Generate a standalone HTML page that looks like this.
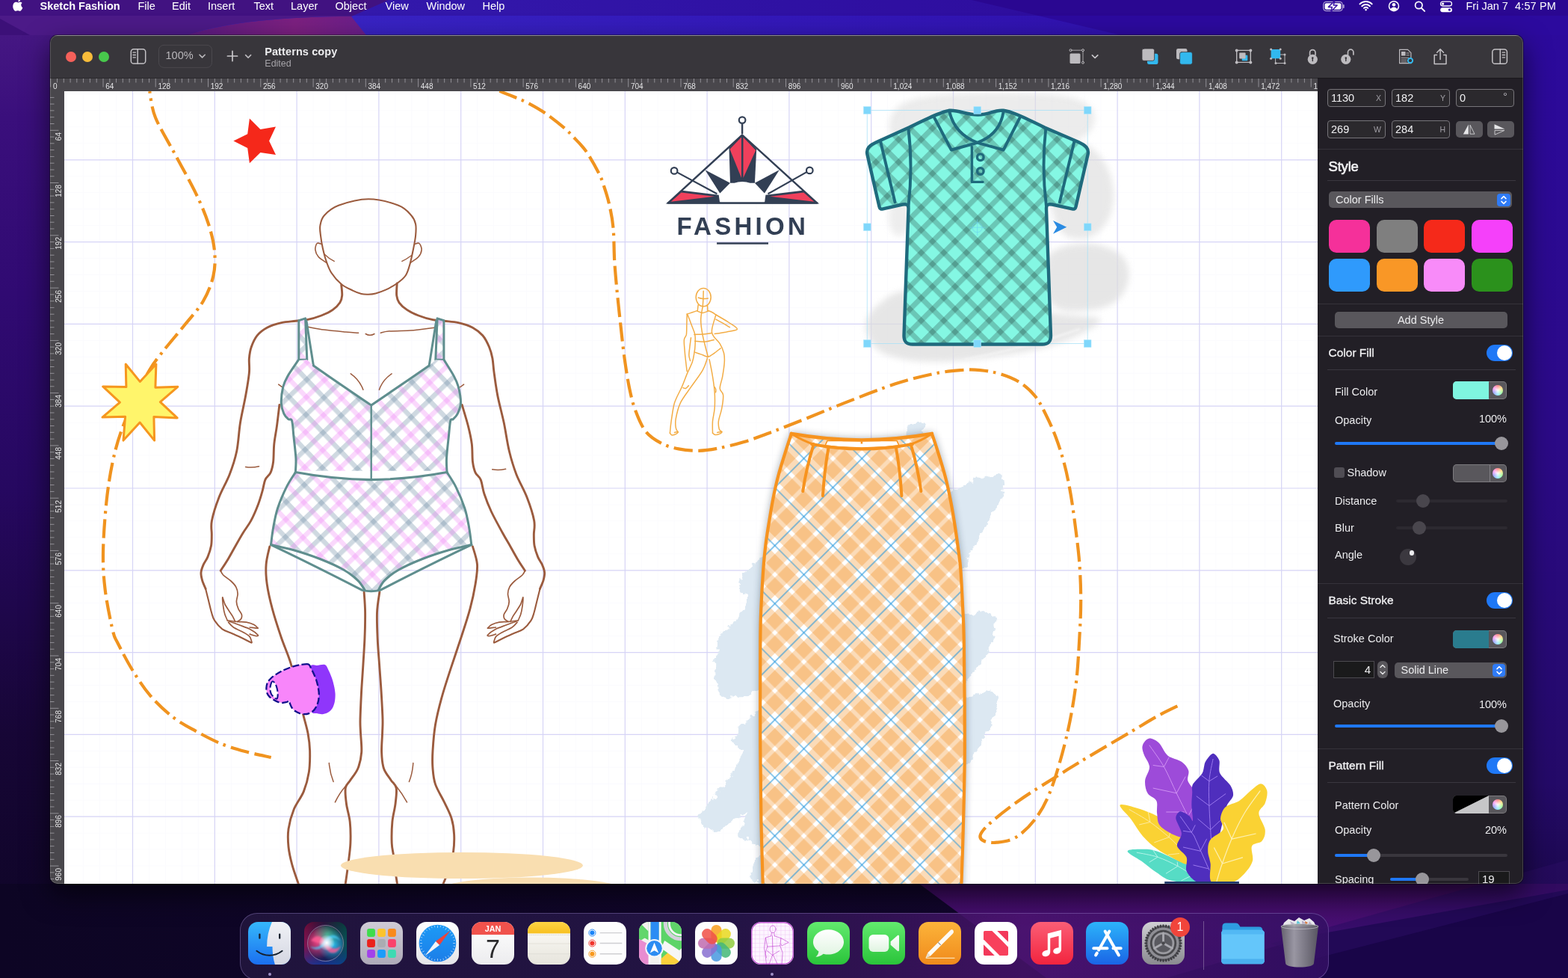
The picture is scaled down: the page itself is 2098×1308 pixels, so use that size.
<!DOCTYPE html>
<html lang="en">
<head>
<meta charset="utf-8">
<title>Sketch Fashion — Patterns copy</title>
<style>
*{box-sizing:border-box;margin:0;padding:0}
html,body{width:2098px;height:1308px;overflow:hidden;background:#1a0a4a}
body{font-family:"Liberation Sans",sans-serif;position:relative;color:#fff;-webkit-font-smoothing:antialiased}
.abs{position:absolute}
#wall{position:absolute;left:0;top:0;width:2098px;height:1308px}
#menubar,#win,#dock{will-change:transform}
#menubar{position:absolute;left:0;top:0;width:2098px;height:21px;background:rgba(40,0,110,.28)}
#menubar span{position:absolute;top:-.5px;font-size:14.5px;line-height:17px;color:#fff;white-space:nowrap}
#menubar b{font-weight:700}
#win{position:absolute;left:67px;top:47px;width:1971px;height:1135px;border-radius:10px;overflow:hidden;background:#38363b;box-shadow:0 0 0 1px rgba(0,0,0,.35),0 14px 36px rgba(0,0,0,.6)}
#win:after{content:"";position:absolute;left:0;top:0;width:1971px;height:1135px;border-radius:10px;box-shadow:inset 0 0 0 1px rgba(255,255,255,.16);pointer-events:none}
#toolbar{position:absolute;left:0;top:0;width:1971px;height:57px;background:#38363b;border-top:1px solid #77757a}
#hruler{position:absolute;left:0;top:57px;width:1696px;height:18px;background:#49474c;border-top:1px solid #2a282c;overflow:hidden}
#vruler{position:absolute;left:0;top:75px;width:19px;height:1060px;background:#49474c;overflow:hidden}
.rl{position:absolute;font-size:10px;line-height:10px;color:#e4e4e6;white-space:nowrap}
#canvas{position:absolute;left:19px;top:75px;width:1677px;height:1060px;background:#fff;overflow:hidden}
#panel{position:absolute;left:1696px;top:57px;width:275px;height:1078px;background:#221f26;border-top:1px solid #1a181c;overflow:hidden}
#panel .t{position:absolute;white-space:nowrap;color:#ebebed;font-size:14.5px;line-height:18px}
#panel .h{position:absolute;white-space:nowrap;color:#f2f2f4;font-size:15.5px;line-height:20px;font-weight:400;-webkit-text-stroke:.28px #f2f2f4}
#panel .sep{position:absolute;left:0;width:275px;height:1px;background:#35323a}
#panel .ln{position:absolute;left:13px;width:252px;height:1px;background:#3a373f}
.fld{position:absolute;height:24px;border:1px solid #77757a;border-radius:4px;background:#2b292d;color:#f0f0f2;font-size:14.5px;line-height:22px;padding-left:4px;white-space:nowrap}
.fld i{position:absolute;right:5px;top:0;font-style:normal;font-size:10.5px;color:#a09ea4}
.btn{position:absolute;background:#59575c;border-radius:5px}
.sw{position:absolute;width:55px;height:44px;border-radius:10px}
.tog{position:absolute;width:35px;height:22px;border-radius:11px;background:#1f78f6}
.tog:after{content:"";position:absolute;right:1px;top:1px;width:20px;height:20px;border-radius:10px;background:#fff}
.well{position:absolute;width:72px;height:24px;border-radius:5px;background:#59575c;overflow:hidden;box-shadow:inset 0 0 0 1px rgba(255,255,255,.22)}
.well .c{position:absolute;left:0;top:0;width:48px;height:24px}
.well .w{position:absolute;left:53px;top:5px;width:14px;height:14px;border-radius:7px;background:conic-gradient(from 0deg,#ff6a6a,#ffd86a,#8cff8a,#7fe6ff,#8a8cff,#ff8af0,#ff6a6a)}
.well .w:after{content:"";position:absolute;left:0;top:0;width:14px;height:14px;border-radius:7px;background:radial-gradient(circle,rgba(255,255,255,.95) 0,rgba(255,255,255,.3) 55%,rgba(255,255,255,0) 100%)}
.trk{position:absolute;height:4px;border-radius:2px}
.knob{position:absolute;width:18px;height:18px;border-radius:9px;background:#98969b}
.step{position:absolute;border-radius:4px;background:#2f7bf6}
#dock{position:absolute;left:320.5px;top:1221px;width:1457px;height:90px;border-radius:23px;background:linear-gradient(90deg,rgba(34,22,62,.9) 0%,rgba(38,22,72,.88) 45%,rgba(74,20,110,.8) 72%,rgba(52,16,100,.85) 100%);box-shadow:inset 0 0 0 1px rgba(170,150,220,.35)}
.di{position:absolute;top:12px;width:57px;height:57px;border-radius:13px;overflow:hidden}
</style>
</head>
<body>
<svg id="wall" width="2098" height="1308" viewBox="0 0 2098 1308">
<defs>
<linearGradient id="wg1" x1="0" y1="0" x2="0" y2="1"><stop offset="0" stop-color="#4a1a86"/><stop offset=".12" stop-color="#3a0f7c"/><stop offset=".3" stop-color="#300a72"/><stop offset=".5" stop-color="#260860"/><stop offset=".75" stop-color="#170636"/><stop offset="1" stop-color="#0d0524"/></linearGradient>
<linearGradient id="wg2" x1="0" y1="0" x2="0" y2="1"><stop offset="0" stop-color="#2c0a9e"/><stop offset=".45" stop-color="#2b0a86"/><stop offset=".8" stop-color="#240a68"/><stop offset=".93" stop-color="#1a0848"/><stop offset="1" stop-color="#170740"/></linearGradient>
<linearGradient id="wg3" x1="0" y1="0" x2="1" y2="0"><stop offset="0" stop-color="#3c2ccc"/><stop offset=".5" stop-color="#3318b8"/><stop offset="1" stop-color="#2c0aa0"/></linearGradient>
<linearGradient id="wg4" x1="0" y1="0" x2="1" y2="0"><stop offset="0" stop-color="#5a1a82"/><stop offset=".6" stop-color="#7c2080"/><stop offset="1" stop-color="#6a1e8a"/></linearGradient>
<linearGradient id="wg5" x1="0" y1="0" x2="0" y2="1"><stop offset="0" stop-color="#3a0a5c"/><stop offset=".5" stop-color="#4a1076"/><stop offset="1" stop-color="#3c0e6a"/></linearGradient>
<linearGradient id="wg6" x1="0" y1="0" x2="1" y2="0"><stop offset="0" stop-color="#0d0524"/><stop offset="1" stop-color="#140630"/></linearGradient>
</defs>
<rect width="2098" height="1308" fill="url(#wg1)"/>
<rect x="1000" width="1098" height="1308" fill="url(#wg2)"/>
<path d="M0 1182H2098V1308H0Z" fill="url(#wg6)"/>
<path d="M1230 1182H2098V1308H1400Z" fill="url(#wg5)"/>
<path d="M1560 1308L1760 1250L2098 1190V1308Z" fill="#190548"/>
<path d="M1700 1262L2098 1150V1195L1760 1282Z" fill="#2a0c62" opacity=".55"/>
<path d="M0 0H2098V47H0Z" fill="url(#wg3)"/>
<path d="M0 0H300L260 47H0Z" fill="#4a1a86"/>
<path d="M250 47C300 30 380 22 470 22L490 47Z" fill="url(#wg4)"/>
<path d="M0 0H520L470 22C380 22 300 30 250 47H0Z" fill="#4c1a88"/>
<path d="M0 25L40 47H0Z" fill="#3c1078"/>
<path d="M1300 0H2098V47H1500Z" fill="#2c0a9e"/>
</svg>
<div id="menubar">
<svg class="abs" style="left:17px;top:0" width="15" height="17" viewBox="0 0 15 17"><path fill="#fff" d="M10.3 0c.1 1-.3 1.9-.9 2.6-.6.7-1.5 1.2-2.4 1.1C6.9 2.8 7.4 1.8 7.9 1.2 8.5.5 9.5 0 10.3 0ZM13.4 12.3c-.4.9-.6 1.3-1.1 2.1-.7 1.1-1.7 2.5-2.9 2.5-1.1 0-1.4-.7-2.9-.7-1.5 0-1.8.7-2.9.7-1.2 0-2.1-1.2-2.8-2.3C-1.2 11.5-.4 7.3 1.2 5.6 2 4.7 3.1 4.2 4.1 4.2c1.2 0 2 .7 3 .7 1 0 1.6-.7 3-.7.9 0 1.9.5 2.6 1.4-2.3 1.3-1.9 4.6.7 6.7Z" transform="translate(.6 -1.2) scale(.95)"/></svg>
<span style="left:53.5px"><b>Sketch Fashion</b></span>
<span style="left:184.5px">File</span>
<span style="left:230px">Edit</span>
<span style="left:278px">Insert</span>
<span style="left:339.5px">Text</span>
<span style="left:389px">Layer</span>
<span style="left:448.5px">Object</span>
<span style="left:515.5px">View</span>
<span style="left:570.5px">Window</span>
<span style="left:645.5px">Help</span>
<span style="left:1961.5px">Fri Jan 7</span>
<span style="left:2027px;letter-spacing:.15px">4:57 PM</span>
<svg class="abs" style="left:1768px;top:0" width="180" height="18" viewBox="1768 0 180 18" fill="none" stroke="#fff">
<rect x="1770.8" y="2.4" width="25.4" height="12.2" rx="3.4" stroke-width="1" opacity=".75"/>
<rect x="1772.6" y="4.2" width="21.8" height="8.6" rx="2" fill="#fff" stroke="none"/>
<path d="M1797.9 6.7v3.6" stroke-width="1.5" stroke-linecap="round" opacity=".7"/>
<path d="M1785.8 1.3L1777.4 9.4H1782.4L1780.8 15.6L1789.2 7H1784.2Z" fill="#fff" stroke="#3a12a4" stroke-width="1.5" stroke-linejoin="round"/>
<path d="M1819.5 5.4a11.5 11.5 0 0 1 16.2 0M1822.3 8.2a7.5 7.5 0 0 1 10.6 0M1825 10.9a3.7 3.7 0 0 1 5.2 0" stroke-width="2" stroke-linecap="round"/>
<circle cx="1827.6" cy="13.1" r="1.3" fill="#fff" stroke="none"/>
<circle cx="1865" cy="8.2" r="6.5" stroke-width="1.5"/>
<circle cx="1865" cy="6.3" r="2.3" fill="#fff" stroke="none"/>
<path d="M1860.6 12.3c.9-2 2.6-2.9 4.4-2.9s3.5.9 4.4 2.9c-1.2 1.3-2.7 1.9-4.4 1.9s-3.2-.6-4.4-1.9z" fill="#fff" stroke="none"/>
<circle cx="1898.3" cy="7" r="4.7" stroke-width="1.7"/>
<path d="M1901.8 10.6l4.3 4.3" stroke-width="2" stroke-linecap="round"/>
<rect x="1927.5" y="2.2" width="15" height="5.8" rx="2.9" stroke-width="1.3"/>
<circle cx="1930.6" cy="5.1" r="1.7" fill="#fff" stroke="none"/>
<rect x="1927.2" y="10.2" width="15.8" height="6" rx="3" fill="#fff" stroke="none"/>
<circle cx="1939.4" cy="13.1" r="1.7" fill="#3a12a4" stroke="none"/>
</svg>
</div>
<div id="win">
<div id="toolbar">
<div class="abs" style="left:21px;top:20.5px;width:14px;height:14px;border-radius:7px;background:#f5605a"></div>
<div class="abs" style="left:43px;top:20.5px;width:14px;height:14px;border-radius:7px;background:#f8bc3a"></div>
<div class="abs" style="left:64.5px;top:20.5px;width:14px;height:14px;border-radius:7px;background:#48c84c"></div>
<svg class="abs" style="left:0;top:-1px" width="1971" height="58" viewBox="67 47 1971 58" fill="none" stroke="#c4c2c6" stroke-width="1.5" stroke-linecap="round" stroke-linejoin="round">
<!-- left sidebar icon -->
<rect x="175.3" y="65.7" width="19.4" height="19.4" rx="3.6"/>
<path d="M184.2 65.7v19.4" /><path d="M178 70.2h3.4M178 73.5h3.4M178 76.8h3.4" stroke-width="1.3"/>
<!-- zoom box -->
<rect x="212.5" y="60.3" width="71" height="30" rx="6.5" stroke="#4b494e" stroke-width="1"/>
<path d="M267 73.3l3.6 3.6 3.6-3.6" stroke="#bab8bc" stroke-width="1.6"/>
<!-- plus -->
<path d="M304.4 75h13.2M311 68.4v13.2" stroke="#c8c6ca" stroke-width="1.7"/>
<path d="M328.6 73.6l3.5 3.5 3.5-3.5" stroke="#bab8bc" stroke-width="1.6"/>
<!-- artboard -->
<rect x="1431.5" y="71.5" width="14" height="13.5" rx="1.5" fill="#bdbbbf" stroke="none"/>
<path d="M1432.5 67.2h16.5v16.5" stroke="#a8a6aa" stroke-width="1"/>
<circle cx="1432.5" cy="67.2" r="1.5" fill="#38363b" stroke="#bdbbbf" stroke-width="1"/><circle cx="1449" cy="67.2" r="1.5" fill="#38363b" stroke="#bdbbbf" stroke-width="1"/><circle cx="1449" cy="83.7" r="1.5" fill="#38363b" stroke="#bdbbbf" stroke-width="1"/>
<path d="M1461.4 73.8l3.7 3.7 3.7-3.7" stroke="#c8c6ca" stroke-width="1.7"/>
<!-- arrange -->
<rect x="1535" y="71.8" width="14.5" height="14.3" rx="2.4" fill="#32b8ee" stroke="none"/>
<rect x="1528" y="65" width="16.6" height="16.3" rx="2.4" fill="#bdbbbf" stroke="#38363b" stroke-width=".8"/>
<rect x="1574" y="65" width="14.5" height="14.3" rx="2.4" fill="#bdbbbf" stroke="none"/>
<rect x="1578.6" y="69.6" width="16.8" height="16.6" rx="2.4" fill="#32b8ee" stroke="#38363b" stroke-width=".8"/>
<!-- group -->
<rect x="1654.7" y="67.4" width="18.6" height="16" stroke="#bdbbbf" stroke-width="1.4"/>
<rect x="1661.7" y="73.8" width="7.6" height="7.4" rx="1" fill="#32b8ee" stroke="none"/>
<rect x="1658.2" y="70.4" width="8.4" height="8.2" rx="1" fill="#bdbbbf" stroke="none"/>
<g fill="#bdbbbf" stroke="none"><circle cx="1654.7" cy="67.4" r="2"/><circle cx="1673.3" cy="67.4" r="2"/><circle cx="1654.7" cy="83.4" r="2"/><circle cx="1673.3" cy="83.4" r="2"/></g>
<!-- ungroup -->
<rect x="1707" y="73" width="12" height="11.5" stroke="#bdbbbf" stroke-width="1"/>
<rect x="1700.6" y="66" width="12.6" height="12.2" rx="1.8" fill="#32b8ee" stroke="none"/>
<g fill="#bdbbbf" stroke="none"><circle cx="1700.6" cy="66" r="1.5"/><circle cx="1713.2" cy="66" r="1.5"/><circle cx="1700.6" cy="78.2" r="1.5"/><circle cx="1713.2" cy="78.2" r="1.5"/><circle cx="1719" cy="73" r="1.5"/><circle cx="1707" cy="84.5" r="1.5"/><circle cx="1719" cy="84.5" r="1.5"/></g>
<!-- lock -->
<path d="M1752.6 73.5v-3.2a3.7 3.7 0 0 1 7.4 0v3.2" stroke="#bdbbbf" stroke-width="1.7"/>
<circle cx="1756.3" cy="79.3" r="6.6" fill="#bdbbbf" stroke="none"/>
<circle cx="1756.3" cy="77.6" r="1.3" fill="#38363b" stroke="none"/><path d="M1756.3 78v3.6" stroke="#38363b" stroke-width="1.4"/>
<!-- unlock -->
<path d="M1803.5 73.5v-3.6a3.7 3.7 0 0 1 7.4 0v3" stroke="#bdbbbf" stroke-width="1.7"/>
<circle cx="1800.8" cy="79.3" r="6.6" fill="#bdbbbf" stroke="none"/>
<circle cx="1800.8" cy="77.6" r="1.3" fill="#38363b" stroke="none"/><path d="M1800.8 78v3.6" stroke="#38363b" stroke-width="1.4"/>
<!-- doc settings -->
<path d="M1872.6 66.4h11l4.3 4.3v14h-15.3z" stroke="#bdbbbf" stroke-width="1.2"/>
<rect x="1875" y="69" width="5.5" height="5.5" fill="#bdbbbf" stroke="none"/>
<path d="M1882 71h3.4M1882 73.8h3.4M1875 77.4h10M1875 80.2h7M1875 82.8h7" stroke="#a9a7ab" stroke-width="1"/>
<circle cx="1887" cy="81" r="3.1" fill="#38363b" stroke="#32b8ee" stroke-width="2" stroke-dasharray="1.6 .9"/>
<!-- share -->
<path d="M1922.5 73.5h-3.3v12h15.8v-12h-3.3" stroke="#c4c2c6" stroke-width="1.5"/>
<path d="M1927.1 79.5v-13.5M1922.7 70.2l4.4-4.4 4.4 4.4" stroke="#c4c2c6" stroke-width="1.5"/>
<!-- right sidebar -->
<rect x="1996.8" y="65.9" width="19.6" height="19.4" rx="3.6"/>
<path d="M2007.3 65.9v19.4"/><path d="M2010.2 70.2h3.4M2010.2 73.5h3.4M2010.2 76.8h3.4" stroke-width="1.3"/>
</svg>
<span class="abs" style="left:154.5px;top:17px;font-size:14.5px;line-height:18px;color:#b9b7bb">100%</span>
<span class="abs" style="left:287.2px;top:11.5px;font-size:14.5px;line-height:18px;font-weight:700;color:#ececee;letter-spacing:.1px;white-space:nowrap">Patterns copy</span>
<span class="abs" style="left:287.3px;top:29.5px;font-size:12.5px;line-height:15px;color:#a5a3a8;white-space:nowrap">Edited</span>
</div>
<div id="hruler">
<svg class="abs" style="left:0;top:0" width="1696" height="18" viewBox="0 0 1696 18"><path stroke="#918f95" stroke-width="1" fill="none" d="
M0.7 0v11.5M9.5 0v5.5M18.3 0v5.5M27.1 0v5.5M35.8 0v5.5M44.6 0v5.5M53.4 0v5.5M62.2 0v5.5M71 0v11.5M79.8 0v5.5M88.5 0v5.5M97.3 0v5.5M106.1 0v5.5M114.9 0v5.5M123.7 0v5.5M132.5 0v5.5M141.2 0v11.5M150 0v5.5M158.8 0v5.5M167.6 0v5.5M176.4 0v5.5M185.2 0v5.5M193.9 0v5.5M202.7 0v5.5M211.5 0v11.5M220.3 0v5.5M229.1 0v5.5M237.9 0v5.5M246.7 0v5.5M255.4 0v5.5M264.2 0v5.5M273 0v5.5M281.8 0v11.5M290.6 0v5.5M299.4 0v5.5M308.1 0v5.5M316.9 0v5.5M325.7 0v5.5M334.5 0v5.5M343.3 0v5.5M352.1 0v11.5M360.8 0v5.5M369.6 0v5.5M378.4 0v5.5M387.2 0v5.5M396 0v5.5M404.8 0v5.5M413.5 0v5.5M422.3 0v11.5M431.1 0v5.5M439.9 0v5.5M448.7 0v5.5M457.5 0v5.5M466.3 0v5.5M475 0v5.5M483.8 0v5.5M492.6 0v11.5M501.4 0v5.5M510.2 0v5.5M519 0v5.5M527.7 0v5.5M536.5 0v5.5M545.3 0v5.5M554.1 0v5.5M562.9 0v11.5M571.7 0v5.5M580.4 0v5.5M589.2 0v5.5M598 0v5.5M606.8 0v5.5M615.6 0v5.5M624.4 0v5.5M633.1 0v11.5M641.9 0v5.5M650.7 0v5.5M659.5 0v5.5M668.3 0v5.5M677.1 0v5.5M685.9 0v5.5M694.6 0v5.5M703.4 0v11.5M712.2 0v5.5M721 0v5.5M729.8 0v5.5M738.6 0v5.5M747.3 0v5.5M756.1 0v5.5M764.9 0v5.5M773.7 0v11.5M782.5 0v5.5M791.3 0v5.5M800 0v5.5M808.8 0v5.5M817.6 0v5.5M826.4 0v5.5M835.2 0v5.5M844 0v11.5M852.7 0v5.5M861.5 0v5.5M870.3 0v5.5M879.1 0v5.5M887.9 0v5.5M896.7 0v5.5M905.5 0v5.5M914.2 0v11.5M923 0v5.5M931.8 0v5.5M940.6 0v5.5M949.4 0v5.5M958.2 0v5.5M966.9 0v5.5M975.7 0v5.5M984.5 0v11.5M993.3 0v5.5M1002.1 0v5.5M1010.9 0v5.5M1019.6 0v5.5M1028.4 0v5.5M1037.2 0v5.5M1046 0v5.5M1054.8 0v11.5M1063.6 0v5.5M1072.3 0v5.5M1081.1 0v5.5M1089.9 0v5.5M1098.7 0v5.5M1107.5 0v5.5M1116.3 0v5.5M1125.1 0v11.5M1133.8 0v5.5M1142.6 0v5.5M1151.4 0v5.5M1160.2 0v5.5M1169 0v5.5M1177.8 0v5.5M1186.5 0v5.5M1195.3 0v11.5M1204.1 0v5.5M1212.9 0v5.5M1221.7 0v5.5M1230.5 0v5.5M1239.2 0v5.5M1248 0v5.5M1256.8 0v5.5M1265.6 0v11.5M1274.4 0v5.5M1283.2 0v5.5M1291.9 0v5.5M1300.7 0v5.5M1309.5 0v5.5M1318.3 0v5.5M1327.1 0v5.5M1335.9 0v11.5M1344.7 0v5.5M1353.4 0v5.5M1362.2 0v5.5M1371 0v5.5M1379.8 0v5.5M1388.6 0v5.5M1397.4 0v5.5M1406.1 0v11.5M1414.9 0v5.5M1423.7 0v5.5M1432.5 0v5.5M1441.3 0v5.5M1450.1 0v5.5M1458.8 0v5.5M1467.6 0v5.5M1476.4 0v11.5M1485.2 0v5.5M1494 0v5.5M1502.8 0v5.5M1511.5 0v5.5M1520.3 0v5.5M1529.1 0v5.5M1537.9 0v5.5M1546.7 0v11.5M1555.5 0v5.5M1564.3 0v5.5M1573 0v5.5M1581.8 0v5.5M1590.6 0v5.5M1599.4 0v5.5M1608.2 0v5.5M1617 0v11.5M1625.7 0v5.5M1634.5 0v5.5M1643.3 0v5.5M1652.1 0v5.5M1660.9 0v5.5M1669.7 0v5.5M1678.4 0v5.5M1687.2 0v11.5"/></svg>
<span class="rl" style="left:3.9px;top:5.5px">0</span>
<span class="rl" style="left:74.2px;top:5.5px">64</span>
<span class="rl" style="left:144.4px;top:5.5px">128</span>
<span class="rl" style="left:214.7px;top:5.5px">192</span>
<span class="rl" style="left:285px;top:5.5px">256</span>
<span class="rl" style="left:355.3px;top:5.5px">320</span>
<span class="rl" style="left:425.5px;top:5.5px">384</span>
<span class="rl" style="left:495.8px;top:5.5px">448</span>
<span class="rl" style="left:566.1px;top:5.5px">512</span>
<span class="rl" style="left:636.3px;top:5.5px">576</span>
<span class="rl" style="left:706.6px;top:5.5px">640</span>
<span class="rl" style="left:776.9px;top:5.5px">704</span>
<span class="rl" style="left:847.2px;top:5.5px">768</span>
<span class="rl" style="left:917.4px;top:5.5px">832</span>
<span class="rl" style="left:987.7px;top:5.5px">896</span>
<span class="rl" style="left:1058px;top:5.5px">960</span>
<span class="rl" style="left:1128.3px;top:5.5px">1,024</span>
<span class="rl" style="left:1198.5px;top:5.5px">1,088</span>
<span class="rl" style="left:1268.8px;top:5.5px">1,152</span>
<span class="rl" style="left:1339.1px;top:5.5px">1,216</span>
<span class="rl" style="left:1409.3px;top:5.5px">1,280</span>
<span class="rl" style="left:1479.6px;top:5.5px">1,344</span>
<span class="rl" style="left:1549.9px;top:5.5px">1,408</span>
<span class="rl" style="left:1620.2px;top:5.5px">1,472</span>
<span class="rl" style="left:1690.4px;top:5.5px">1,536</span>
</div>
<div id="vruler">
<svg class="abs" style="left:0;top:0" width="19" height="1060" viewBox="0 0 19 1060"><path stroke="#918f95" stroke-width="1" fill="none" d="
M0 8.4h5.5M0 17.1h5.5M0 25.9h5.5M0 34.7h5.5M0 43.5h5.5M0 52.3h11.5M0 61.1h5.5M0 69.8h5.5M0 78.6h5.5M0 87.4h5.5M0 96.2h5.5M0 105h5.5M0 113.8h5.5M0 122.5h11.5M0 131.3h5.5M0 140.1h5.5M0 148.9h5.5M0 157.7h5.5M0 166.5h5.5M0 175.2h5.5M0 184h5.5M0 192.8h11.5M0 201.6h5.5M0 210.4h5.5M0 219.2h5.5M0 228h5.5M0 236.7h5.5M0 245.5h5.5M0 254.3h5.5M0 263.1h11.5M0 271.9h5.5M0 280.7h5.5M0 289.4h5.5M0 298.2h5.5M0 307h5.5M0 315.8h5.5M0 324.6h5.5M0 333.4h11.5M0 342.1h5.5M0 350.9h5.5M0 359.7h5.5M0 368.5h5.5M0 377.3h5.5M0 386.1h5.5M0 394.8h5.5M0 403.6h11.5M0 412.4h5.5M0 421.2h5.5M0 430h5.5M0 438.8h5.5M0 447.6h5.5M0 456.3h5.5M0 465.1h5.5M0 473.9h11.5M0 482.7h5.5M0 491.5h5.5M0 500.3h5.5M0 509h5.5M0 517.8h5.5M0 526.6h5.5M0 535.4h5.5M0 544.2h11.5M0 553h5.5M0 561.7h5.5M0 570.5h5.5M0 579.3h5.5M0 588.1h5.5M0 596.9h5.5M0 605.7h5.5M0 614.4h11.5M0 623.2h5.5M0 632h5.5M0 640.8h5.5M0 649.6h5.5M0 658.4h5.5M0 667.2h5.5M0 675.9h5.5M0 684.7h11.5M0 693.5h5.5M0 702.3h5.5M0 711.1h5.5M0 719.9h5.5M0 728.6h5.5M0 737.4h5.5M0 746.2h5.5M0 755h11.5M0 763.8h5.5M0 772.6h5.5M0 781.3h5.5M0 790.1h5.5M0 798.9h5.5M0 807.7h5.5M0 816.5h5.5M0 825.3h11.5M0 834h5.5M0 842.8h5.5M0 851.6h5.5M0 860.4h5.5M0 869.2h5.5M0 878h5.5M0 886.8h5.5M0 895.5h11.5M0 904.3h5.5M0 913.1h5.5M0 921.9h5.5M0 930.7h5.5M0 939.5h5.5M0 948.2h5.5M0 957h5.5M0 965.8h11.5M0 974.6h5.5M0 983.4h5.5M0 992.2h5.5M0 1000.9h5.5M0 1009.7h5.5M0 1018.5h5.5M0 1027.3h5.5M0 1036.1h11.5M0 1044.9h5.5M0 1053.6h5.5"/></svg>
<span class="rl" style="left:7.3px;top:54.8px;transform-origin:0 0;transform:rotate(-90deg) translate(-100%,0);">64</span>
<span class="rl" style="left:7.3px;top:125px;transform-origin:0 0;transform:rotate(-90deg) translate(-100%,0);">128</span>
<span class="rl" style="left:7.3px;top:195.3px;transform-origin:0 0;transform:rotate(-90deg) translate(-100%,0);">192</span>
<span class="rl" style="left:7.3px;top:265.6px;transform-origin:0 0;transform:rotate(-90deg) translate(-100%,0);">256</span>
<span class="rl" style="left:7.3px;top:335.9px;transform-origin:0 0;transform:rotate(-90deg) translate(-100%,0);">320</span>
<span class="rl" style="left:7.3px;top:406.1px;transform-origin:0 0;transform:rotate(-90deg) translate(-100%,0);">384</span>
<span class="rl" style="left:7.3px;top:476.4px;transform-origin:0 0;transform:rotate(-90deg) translate(-100%,0);">448</span>
<span class="rl" style="left:7.3px;top:546.7px;transform-origin:0 0;transform:rotate(-90deg) translate(-100%,0);">512</span>
<span class="rl" style="left:7.3px;top:616.9px;transform-origin:0 0;transform:rotate(-90deg) translate(-100%,0);">576</span>
<span class="rl" style="left:7.3px;top:687.2px;transform-origin:0 0;transform:rotate(-90deg) translate(-100%,0);">640</span>
<span class="rl" style="left:7.3px;top:757.5px;transform-origin:0 0;transform:rotate(-90deg) translate(-100%,0);">704</span>
<span class="rl" style="left:7.3px;top:827.8px;transform-origin:0 0;transform:rotate(-90deg) translate(-100%,0);">768</span>
<span class="rl" style="left:7.3px;top:898px;transform-origin:0 0;transform:rotate(-90deg) translate(-100%,0);">832</span>
<span class="rl" style="left:7.3px;top:968.3px;transform-origin:0 0;transform:rotate(-90deg) translate(-100%,0);">896</span>
<span class="rl" style="left:7.3px;top:1038.6px;transform-origin:0 0;transform:rotate(-90deg) translate(-100%,0);">960</span>
</div>
<div id="canvas">
<svg class="abs" style="left:0;top:0" width="1677" height="1060" viewBox="86 122 1677 1060"><path fill="none" stroke="#fbfbfe" stroke-width="1" d="M89.7 122V1182M111.6 122V1182M133.6 122V1182M155.5 122V1182M199.5 122V1182M221.4 122V1182M243.4 122V1182M265.3 122V1182M309.3 122V1182M331.2 122V1182M353.2 122V1182M375.1 122V1182M419.1 122V1182M441 122V1182M463 122V1182M484.9 122V1182M528.9 122V1182M550.8 122V1182M572.8 122V1182M594.7 122V1182M638.7 122V1182M660.6 122V1182M682.6 122V1182M704.5 122V1182M748.5 122V1182M770.4 122V1182M792.4 122V1182M814.3 122V1182M858.3 122V1182M880.2 122V1182M902.2 122V1182M924.1 122V1182M968.1 122V1182M990 122V1182M1012 122V1182M1033.9 122V1182M1077.9 122V1182M1099.8 122V1182M1121.8 122V1182M1143.7 122V1182M1187.7 122V1182M1209.6 122V1182M1231.6 122V1182M1253.5 122V1182M1297.5 122V1182M1319.4 122V1182M1341.4 122V1182M1363.3 122V1182M1407.3 122V1182M1429.2 122V1182M1451.2 122V1182M1473.1 122V1182M1517.1 122V1182M1539 122V1182M1561 122V1182M1582.9 122V1182M1626.9 122V1182M1648.8 122V1182M1670.8 122V1182M1692.7 122V1182M1736.7 122V1182M1758.6 122V1182M86 126H1763M86 147.9H1763M86 169.9H1763M86 191.8H1763M86 235.8H1763M86 257.7H1763M86 279.7H1763M86 301.6H1763M86 345.6H1763M86 367.5H1763M86 389.5H1763M86 411.4H1763M86 455.4H1763M86 477.3H1763M86 499.3H1763M86 521.2H1763M86 565.2H1763M86 587.1H1763M86 609.1H1763M86 631H1763M86 675H1763M86 696.9H1763M86 718.9H1763M86 740.8H1763M86 784.8H1763M86 806.7H1763M86 828.7H1763M86 850.6H1763M86 894.6H1763M86 916.5H1763M86 938.5H1763M86 960.4H1763M86 1004.4H1763M86 1026.3H1763M86 1048.3H1763M86 1070.2H1763M86 1114.2H1763M86 1136.1H1763M86 1158.1H1763M86 1180H1763"/><path fill="none" stroke="#d6d4f6" stroke-width="1.2" d="M177.5 122V1182M287.3 122V1182M397.1 122V1182M506.9 122V1182M616.7 122V1182M726.5 122V1182M836.3 122V1182M946.1 122V1182M1055.9 122V1182M1165.7 122V1182M1275.5 122V1182M1385.3 122V1182M1495.1 122V1182M1604.9 122V1182M1714.7 122V1182M86 213.8H1763M86 323.6H1763M86 433.4H1763M86 543.2H1763M86 653H1763M86 762.8H1763M86 872.6H1763M86 982.4H1763M86 1092.2H1763"/></svg>
<svg class="abs" style="left:0;top:0" width="1677" height="1060" viewBox="86 122 1677 1060" font-family="Liberation Sans, sans-serif">
<defs>
<pattern id="pShirt" patternUnits="userSpaceOnUse" width="21.4" height="21.4" patternTransform="translate(1247.7 322.9) rotate(45) translate(-3.5 -3.5)"><rect width="7" height="21.4" fill="#000" fill-opacity=".2"/><rect width="21.4" height="7" fill="#000" fill-opacity=".2"/></pattern>
<pattern id="pSwim" patternUnits="userSpaceOnUse" width="33.2" height="33.2" patternTransform="translate(430 672.6) rotate(46.4) translate(-3.2 -3.2)"><rect width="6.4" height="33.2" fill="#62839e" fill-opacity=".3"/><rect width="33.2" height="6.4" fill="#62839e" fill-opacity=".3"/><rect x="16.6" width="6.4" height="33.2" fill="#f17df5" fill-opacity=".3"/><rect y="16.6" width="33.2" height="6.4" fill="#f17df5" fill-opacity=".3"/></pattern>
<pattern id="pSkirt" patternUnits="userSpaceOnUse" width="54.9" height="54.9" patternTransform="translate(1114.4 729.7) rotate(45)"><rect x="8" width="16.7" height="54.9" fill="#f28914" fill-opacity=".3"/><rect x="30.2" width="16.7" height="54.9" fill="#f28914" fill-opacity=".3"/><rect y="8" width="54.9" height="16.7" fill="#f28914" fill-opacity=".3"/><rect y="30.2" width="54.9" height="16.7" fill="#f28914" fill-opacity=".3"/><path d="M0 0V54.9M54.9 0V54.9M0 0H54.9M0 54.9H54.9" stroke="#2496dc" stroke-width="1.1" fill="none"/></pattern>
<filter id="fBlur8" x="-30%" y="-30%" width="160%" height="160%"><feGaussianBlur stdDeviation="4.5"/></filter>
<filter id="fBlur3" x="-30%" y="-60%" width="160%" height="220%"><feGaussianBlur stdDeviation="1.5"/></filter>
<filter id="fSh" x="-20%" y="-10%" width="140%" height="120%"><feGaussianBlur stdDeviation="7"/></filter>
<filter id="fSh2" x="-20%" y="-10%" width="140%" height="120%"><feGaussianBlur stdDeviation="6"/></filter>
<filter id="fRough" x="-10%" y="-10%" width="120%" height="120%"><feTurbulence type="fractalNoise" baseFrequency=".09" numOctaves="3" seed="7" result="n"/><feDisplacementMap in="SourceGraphic" in2="n" scale="13" xChannelSelector="R" yChannelSelector="G"/></filter>
</defs>
<g fill="none" stroke="#f0931f" stroke-width="4.2" stroke-dasharray="25.3 7.5 25.3 7 3.5 7.5">
<path d="M200.2 122C201.5 127.9 202.2 142.9 208 157.2C213.8 171.5 225.9 190.8 234.9 207.6C243.9 224.4 254.5 243 261.8 258.1C269.1 273.2 274.4 285.6 278.6 298.5C282.8 311.4 285.9 323.8 287 335.5C288.1 347.2 287.9 357.8 285.4 369C282.9 380.2 278.1 392 271.9 402.7C265.7 413.4 257.4 421.8 248.4 433C239.4 444.2 226.1 459.7 218 470C209.9 480.3 206.3 484.2 200 495C193.7 505.8 186.2 521.6 180 535C173.8 548.4 167.5 561.8 162.6 575.5C157.7 589.2 154.2 601.5 150.8 617.5C147.4 633.5 144.5 651.2 142.4 671.4C140.3 691.6 138.3 719 138 738.6C137.7 758.2 138.6 771.6 140.7 789C142.8 806.4 148 831.2 150.8 843C153.6 854.8 153 851 157.5 860C162 869 170.4 885.2 177.7 897C185 908.8 192.3 920.2 201.3 930.6C210.3 941 221.4 951.4 231.5 959.2C241.6 967.1 251.1 971.8 261.8 977.7C272.5 983.6 284.3 989.9 295.5 994.5C306.7 999.1 317.8 1002.2 329 1005.3C340.2 1008.4 357.1 1011.7 362.7 1013" stroke-dashoffset="55.3"/>
<path d="M668.3 121.9C672.1 123.4 684.9 128.3 691.3 131C697.7 133.7 700.2 134.5 706.6 137.9C713 141.3 721.4 145.8 729.5 151.4C737.6 157 749.2 166.3 755.5 171.6C761.8 176.9 762.1 177.8 767 183C771.9 188.2 778.9 194.7 784.6 202.9C790.3 211.1 797.6 224.6 801.4 232C805.2 239.4 805.3 240.7 807.5 247.3C809.7 253.9 812.6 262.1 814.8 271.7C817 281.2 819.3 291.7 820.5 304.6C821.7 317.5 821.4 334.8 822.2 348.9C823.1 363 824.2 374.7 825.6 389.3C827 403.9 828.9 421.3 830.6 436.4C832.3 451.5 833.7 466 835.7 480C837.7 494 839.9 508.6 842.4 520.4C844.9 532.2 847.1 541.1 850.8 550.6C854.4 560.1 858.7 570.5 864.3 577.5C869.9 584.5 877.2 588.9 884.5 592.7C891.8 596.5 899.6 598.7 908 600.4C916.4 602.1 925.9 603 934.9 602.8C943.9 602.6 951.7 601.4 961.8 599.4C971.9 597.4 984.3 594.4 995.5 591C1006.7 587.6 1015.5 584.2 1029 579.2C1042.5 574.2 1059.4 567.4 1076.2 560.7C1093 554 1109.8 546.8 1130 538.9C1150.2 531 1177.7 520.1 1197.3 513.6C1216.9 507.2 1233.1 503.3 1247.7 500.2C1262.3 497.1 1274.1 496 1284.7 495.1C1295.3 494.2 1302.6 494.2 1311.6 495.1C1320.6 496 1329.5 497.4 1338.5 500.2C1347.5 503 1357.6 506.9 1365.4 512C1373.2 517 1380 523.5 1385.6 530.5C1391.2 537.5 1394.6 545 1399.1 554C1403.6 563 1408.3 573.1 1412.5 584.3C1416.7 595.5 1420.9 608.4 1424.3 621.3C1427.7 634.2 1430.2 647 1432.7 661.6C1435.2 676.2 1437.4 693 1439.4 708.7C1441.4 724.4 1443.4 740.1 1444.5 755.8C1445.6 771.5 1446.2 787.2 1446.2 802.9C1446.2 818.6 1445.6 831.5 1444.5 850C1443.4 868.5 1442.5 891.9 1439.8 913.8C1437 935.6 1433.3 958.1 1428 981.1C1422.7 1004.1 1414.5 1033.2 1407.8 1051.7C1401.1 1070.2 1395.4 1080.9 1387.6 1092.1C1379.8 1103.3 1369.7 1113.2 1360.7 1119C1351.7 1124.8 1341.2 1125.8 1333.8 1126.7C1326.3 1127.6 1319.6 1126.3 1316 1124.5C1312.4 1122.7 1310.2 1120.3 1312 1116C1313.8 1111.7 1318.4 1106.4 1327.1 1098.8C1335.8 1091.2 1350.1 1080 1364.1 1070.2C1378.1 1060.4 1396.1 1049.5 1411.2 1040C1426.3 1030.5 1438.1 1023.1 1454.9 1013C1471.7 1002.9 1496.4 988.6 1512.1 979.4C1527.8 970.1 1537.9 963.7 1549.1 957.5C1560.3 951.3 1574.4 944.9 1579.4 942.4" stroke-dashoffset="33.4"/>
</g>
<path d="M333.9 158.6L348.4 173L369 169.6L360.1 188.4L369 207L348.4 204L333.9 218.2L331.2 198.1L312.4 188.4L331.2 179.2Z" fill="#f5281a"/>
<path d="M168.2 487L187.3 510.4L208.9 487L207.9 518.2L237.8 517.3L214.4 537.7L237.1 558.9L205.9 557.6L206.6 589.1L187.1 565L165 589.1L167.6 557.2L137 558.1L160.4 538.1L137.7 516.9L168.9 517.6Z" fill="#fff56b" stroke="#f6961f" stroke-width="3" stroke-linejoin="round"/><g fill="none" stroke="#9b5b3e" stroke-width="2.9" stroke-linecap="round" stroke-linejoin="round">
<path d="M493 266.2C479.6 266.2 462.8 271.1 452.9 274.8C443 278.5 437.9 283.7 433.8 288.2C429.7 292.7 429.2 297.1 428.4 301.6C427.6 306.1 428.4 309.9 429 315C429.6 320.1 430.6 326.5 431.9 332.2C433.2 337.9 434.7 344 436.6 349.4C438.5 354.8 440 359.6 443.3 364.7C446.6 369.8 451.9 376 456.7 380C461.5 384 467.5 386.4 472 388.6C476.5 390.8 480 392.1 483.5 393C487 393.9 489.8 393.8 493 393.7C496.2 393.6 498.8 393.4 502.6 392.4C506.4 391.4 511.2 389.8 516 387.6C520.8 385.4 526.8 382.2 531.2 379C535.7 375.8 539.8 372.8 542.7 368.5C545.6 364.2 546.8 359.2 548.5 353.2C550.2 347.1 551.9 338.6 553.2 332.2C554.5 325.8 555.6 320.4 556.1 315C556.6 309.6 557.1 304.2 556.1 299.7C555.1 295.2 554.2 292.3 550.4 288.2C546.6 284.1 542.8 278.5 533.2 274.8C523.6 271.1 506.4 266.2 493 266.2Z" stroke-width="2.1"/>
<path d="M430 326.4C429 326.2 425.6 324.2 424.2 325.5C422.8 326.8 421.6 331.1 421.9 334.1C422.2 337.1 423.7 340.7 426.1 343.6C428.6 346.5 434.9 350 436.6 351.3" stroke-width="1.6"/>
<path d="M555.1 326.4C556.1 326.2 559.4 324.2 560.9 325.5C562.4 326.8 564.3 331.1 564.1 334.1C563.9 337.1 562.4 340.7 559.9 343.6C557.4 346.5 551.1 350 549.4 351.3" stroke-width="1.6"/>
<path d="M433.8 339.8Q440 346 447.2 349.4M550.4 341.7Q544 346.5 537.9 349.4" stroke-width="1.4"/>
<path d="M456.7 380.9C456.9 383.3 458 391.2 457.7 395.2C457.4 399.2 456.9 401.6 454.8 404.8C452.7 408 449.3 411.5 445.2 414.4C441.1 417.3 435.7 419.8 430 422C424.3 424.2 416.5 426.5 410.8 427.7C405.1 428.9 401.3 428.6 395.6 429.3C389.9 430 382.8 430.1 376.4 431.6C370 433.1 362.7 435.3 357.3 438.2C351.9 441.1 347.5 444.5 344 448.8C340.5 453.1 338.1 458.9 336.3 464C334.5 469.1 333.9 473.5 333.4 479.3C332.9 485.1 334.2 490.2 333.4 498.6C332.6 507 330.6 518.5 328.6 529.6C326.6 540.7 323.5 553 321.5 565.3C319.5 577.6 319.1 592 316.7 603.5C314.3 615 311.2 624.1 307.2 634.4C303.2 644.7 296.9 655.1 292.9 665.4C288.9 675.7 285 688.1 283.4 696.4C281.8 704.7 283.4 709.4 283.3 715C283.2 720.6 283.4 725 282.5 730C281.6 735 279.6 740.7 277.9 744.9C276.2 749.1 273.7 751.8 272.2 755.2C270.7 758.7 269.3 762.2 269 765.6C268.7 769 269.5 772.3 270.5 775.9C271.5 779.5 274.3 785.5 275.1 787.4"/>
<path d="M531.2 379C531.1 381.7 530.2 390.9 530.7 395.2C531.2 399.5 531.8 401.6 534.1 404.8C536.4 408 540.3 411.5 544.6 414.4C548.9 417.3 554.2 419.8 559.9 422C565.6 424.2 573.3 426.5 579 427.7C584.7 428.9 588.6 428.6 594.3 429.3C600 430 607 430.1 613.4 431.6C619.8 433.1 627.1 435.3 632.5 438.2C637.9 441.1 642.2 444.5 645.9 448.8C649.6 453.1 652.3 458.9 654.5 464C656.7 469.1 657.8 473.5 658.9 479.3C660 485.1 659.9 490.2 661.1 498.6C662.3 507 663.7 518.5 665.9 529.6C668.1 540.7 671.6 553 674.2 565.3C676.8 577.6 678.6 592 681.4 603.5C684.2 615 686.9 624.1 690.9 634.4C694.9 644.7 701.2 655.1 705.2 665.4C709.2 675.7 713.2 688.1 714.7 696.4C716.2 704.7 714.2 709.4 714.3 715C714.4 720.6 714.2 725 715.1 730C716 735 718 740.7 719.7 744.9C721.4 749.1 723.9 751.8 725.4 755.2C726.9 758.7 728.3 762.2 728.6 765.6C728.9 769 728.1 772.3 727.1 775.9C726.1 779.5 723.3 785.5 722.5 787.4"/>
<path d="M373.9 541.5C373.3 546.3 371.6 561.4 370.4 570.1C369.2 578.8 367.6 586 366.8 593.9C366 601.8 366.4 611.4 365.6 617.8C364.8 624.2 363.8 628.1 362 632.1C360.2 636.1 356.7 637.6 354.9 641.6C353.1 645.6 352.9 650.3 351.3 655.9C349.7 661.5 347.9 668.2 345.3 675C342.7 681.8 339.2 690.1 335.8 696.4C332.4 702.7 328.4 707.4 325 713C321.6 718.6 318.4 724.3 315.2 730C311.9 735.7 308.8 741.7 305.5 747.2C302.2 752.8 296.9 760.6 295.2 763.3"/>
<path d="M618.2 541.5C619.6 546.3 624.3 561.4 626.5 570.1C628.7 578.8 630.3 586 631.3 593.9C632.3 601.8 631.7 611.4 632.5 617.8C633.3 624.2 634.3 628.1 636.1 632.1C637.9 636.1 641.2 636.8 643.2 641.6C645.2 646.4 645.6 653.6 648 660.7C650.4 667.9 653.4 675.8 657.5 684.5C661.6 693.2 668.5 705.4 672.6 713C676.8 720.6 679.1 724.3 682.4 730C685.6 735.7 688.8 741.7 692.1 747.2C695.4 752.8 700.7 760.6 702.4 763.3"/>
<g stroke-width="1.7">
<path d="M275.1 787.4C275.7 790 277.8 798.1 279.1 803.4C280.4 808.8 281.8 815.1 283.1 819.5C284.4 823.9 284.7 826.2 287.1 829.8C289.5 833.4 293.6 838.4 297.4 841.3C301.3 844.1 305.7 845 310.1 847C314.5 849 319.4 851.2 323.8 853.3C328.2 855.4 334.3 858.6 336.5 859.6" stroke-width="2.1"/>
<path d="M295.2 763.3C295.7 764.2 296.3 766.7 298.6 769C300.9 771.3 306 774.4 308.9 777C311.8 779.7 314.3 782.2 315.8 785.1C317.3 787.9 318 791 318.1 794.2C318.2 797.5 316.3 801.3 316.4 804.6C316.5 807.8 317.5 810.9 318.7 813.7C319.8 816.6 322.6 819.5 323.3 821.8C323.9 824.1 323.6 825.9 322.7 827.5C321.7 829.1 318.4 830.9 317.5 831.5"/>
<path d="M304.3 829.8C303.9 828.7 301.7 824.4 300.9 821.8C300.1 819.2 299 813.4 298.6 810.3C298.2 807.2 297.4 799.1 297.7 798.8C298 798.5 299.7 805.6 300.9 808C302.1 810.5 305.2 815 306.6 817.2C308 819.3 310.1 822.2 311.2 824.1C312.3 826 314.2 830.5 314.7 831.5"/>
<path d="M304.3 829.8C306.5 830.1 313.3 831.1 317.5 831.5C321.7 831.9 325.8 831.4 329.6 832.1C333.3 832.8 337.3 834.2 339.9 835.5C342.5 836.9 344.2 839.4 345.1 840.1"/>
<path d="M306.6 831C308.7 831.7 314.5 833.7 319.2 835.5C324 837.4 331 839.6 335.3 841.9C339.6 844.1 343.9 847.9 345.1 849.3C346.2 850.7 344 850.6 342.2 850.5C340.4 850.3 335.5 848.5 334.2 848.2"/>
<path d="M345.1 840.1C344.4 840.1 342.9 840.1 341 839.9C339.2 839.7 335.3 839.1 334.2 839"/>
<path d="M305.5 832.1C306.6 833.2 308.9 836.7 312.4 839C315.8 841.3 322.5 843.8 326.1 845.9C329.8 848 332.3 849.4 334.2 851.6C336 853.8 336.5 857.8 337 859.1"/>
</g>
<g stroke-width="1.7">
<path d="M722.5 787.4C721.9 790 719.8 798.1 718.5 803.4C717.2 808.8 715.8 815.1 714.5 819.5C713.2 823.9 712.9 826.2 710.5 829.8C708.1 833.4 704 838.4 700.2 841.3C696.3 844.1 691.9 845 687.5 847C683.1 849 678.2 851.2 673.8 853.3C669.4 855.4 663.3 858.6 661.1 859.6" stroke-width="2.1"/>
<path d="M702.4 763.3C701.9 764.2 701.3 766.7 699 769C696.7 771.3 691.6 774.4 688.7 777C685.8 779.7 683.3 782.2 681.8 785.1C680.3 787.9 679.6 791 679.5 794.2C679.4 797.5 681.3 801.3 681.2 804.6C681.1 807.8 680.1 810.9 678.9 813.7C677.8 816.6 675 819.5 674.3 821.8C673.7 824.1 674 825.9 674.9 827.5C675.9 829.1 679.2 830.9 680.1 831.5"/>
<path d="M693.3 829.8C693.7 828.7 695.9 824.4 696.7 821.8C697.5 819.2 698.6 813.4 699 810.3C699.4 807.2 700.2 799.1 699.9 798.8C699.6 798.5 697.9 805.6 696.7 808C695.5 810.5 692.4 815 691 817.2C689.6 819.3 687.5 822.2 686.4 824.1C685.3 826 683.4 830.5 682.9 831.5"/>
<path d="M693.3 829.8C691.1 830.1 684.3 831.1 680.1 831.5C675.9 831.9 671.8 831.4 668 832.1C664.3 832.8 660.3 834.2 657.7 835.5C655.1 836.9 653.4 839.4 652.5 840.1"/>
<path d="M691 831C688.9 831.7 683.1 833.7 678.4 835.5C673.6 837.4 666.6 839.6 662.3 841.9C658 844.1 653.7 847.9 652.5 849.3C651.4 850.7 653.6 850.6 655.4 850.5C657.2 850.3 662.1 848.5 663.4 848.2"/>
<path d="M652.5 840.1C653.2 840.1 654.7 840.1 656.6 839.9C658.4 839.7 662.3 839.1 663.4 839"/>
<path d="M692.1 832.1C691 833.2 688.7 836.7 685.2 839C681.8 841.3 675.1 843.8 671.5 845.9C667.8 848 665.3 849.4 663.4 851.6C661.6 853.8 661.1 857.8 660.6 859.1"/>
</g>
<g stroke-width="1.5">
<path d="M411.8 437.3C415.5 437.9 425.4 440 433.8 441.1C442.2 442.2 454.8 443.3 462.4 444C470 444.7 476.7 445.1 479.6 445.3"/>
<path d="M509.3 445.3C511.1 444.9 513.3 443.5 519.8 443C526.3 442.5 538.2 442.9 548.4 442.1C558.6 441.3 575.5 438.9 580.9 438.2"/>
<path d="M489.2 446.5Q494.9 450 501 446.5"/>
<path d="M469.3 499.8Q481 508 485.9 521.2M524.1 499.8Q512 508 507.4 521.2"/>
<path d="M372.7 514.1L377.5 517.7M620.6 514.1L615.8 517.7"/>
<path d="M328.6 624.4Q337 626 346.5 623.7M658.7 627.8Q667 629.5 676.6 627.3"/>
<path d="M440.3 1020.5Q441.5 1034 446.1 1045.5M552.8 1020.5Q552 1034 547.4 1045.5"/>
<path d="M462.3 1051.5Q454 1061 448.4 1072.9M530.2 1051.5Q538 1061 544.5 1072.9"/>
</g>
<path d="M360.8 731C360 735 356.7 746.5 356.1 754.8C355.5 763.1 355.8 771.1 357.2 781C358.6 790.9 361.2 802.5 364.4 814.4C367.6 826.3 372.1 840.2 376.3 852.5C380.5 864.8 385.8 876.2 389.4 888.3C393 900.4 395.2 913.5 398 925C400.8 936.5 403.8 948 406.1 957.4C408.5 966.8 410.7 973.5 412.1 981.2C413.5 988.9 414.4 995.3 414.6 1003.8C414.8 1012.3 414.8 1023.3 413.4 1032.4C412 1041.5 409.7 1050.2 406.3 1058.6C402.9 1066.9 396.6 1074.2 393.2 1082.5C389.8 1090.8 387.2 1100.4 386 1108.7C384.8 1117 385.2 1124.5 386 1132.5C386.8 1140.5 388.6 1148.2 390.8 1156.4C393 1164.6 397.2 1175.8 399.1 1181.4C401 1187 401.5 1188.6 402 1190"/>
<path d="M487.1 791.8C487.4 796.4 488.5 808.7 488.6 819.2C488.7 829.7 488.4 843 487.9 854.9C487.4 866.8 486.5 878.8 485.8 890.7C485.1 902.6 484.1 914.5 483.5 926.4C482.9 938.3 482.2 953.3 482 962.2C481.8 971.1 482.2 972.7 482.5 980C482.8 987.3 484.3 998.2 483.7 1006.2C483.1 1014.2 481.5 1021.4 478.9 1027.7C476.3 1034 471 1039.9 468.2 1044.3C465.4 1048.7 463.1 1048.7 462.3 1053.9C461.5 1059.1 462.5 1067.8 463.5 1075.3C464.5 1082.8 467.3 1090.5 468.2 1099.2C469.1 1108 469.3 1118.3 468.9 1127.8C468.5 1137.3 466.9 1147.5 465.8 1156.4C464.7 1165.3 463.1 1175.8 462.3 1181.4C461.5 1187 461.2 1188.6 461 1190"/>
<path d="M507.9 791.8C507.3 796.4 504.9 808.7 504.5 819.2C504.1 829.7 504.7 843 505.2 854.9C505.7 866.8 506.9 878.8 507.7 890.7C508.5 902.6 509.5 914.5 510.2 926.4C510.9 938.3 511.8 953.3 512 962.2C512.2 971.1 511.8 972.7 511.6 980C511.4 987.3 510.3 998.2 510.6 1006.2C510.9 1014.2 511.4 1021.5 513.5 1027.7C515.6 1033.9 520.2 1038.8 523 1043.2C525.8 1047.6 529.2 1048.6 530.2 1053.9C531.2 1059.2 529.9 1067.8 529 1075.3C528.1 1082.8 525.7 1090.5 524.9 1099.2C524.1 1108 523.9 1120.3 524.2 1127.8C524.5 1135.3 525.8 1138.2 526.6 1144.4C527.4 1150.6 528.2 1158.8 529 1165C529.8 1171.2 530.7 1177.2 531.4 1181.4C532.1 1185.6 532.7 1188.6 533 1190"/>
<path d="M632.5 731C633.5 735 637.9 746.5 638.5 754.8C639.1 763.1 637.7 771.1 636.1 781C634.5 790.9 632.1 802.5 628.9 814.4C625.7 826.3 621.4 839 617 852.5C612.6 866 607.1 881.9 602.7 895.4C598.3 908.9 594.2 921.3 590.8 933.6C587.4 945.9 584.5 957.6 582.5 969.3C580.5 981 579.6 994.1 579 1003.8C578.4 1013.5 578.4 1020.2 579 1027.7C579.6 1035.2 580 1041.6 582.6 1049.1C585.2 1056.6 590.9 1065.4 594.5 1072.9C598.1 1080.5 601.9 1087.2 604.1 1094.4C606.3 1101.6 607.2 1108.2 607.6 1115.8C608 1123.3 607.6 1132 606.5 1139.7C605.4 1147.4 603.2 1155 601 1162C598.8 1169 595.1 1176.7 593.3 1181.4C591.5 1186.1 590.5 1188.6 590 1190"/>
</g>
<g stroke="#5f8e8e" stroke-width="3" stroke-linejoin="round" stroke-linecap="round">
<path d="M399.8 428.7L408.6 425.8L410.8 481.2L399.8 481.2Z" fill="#fff" stroke="none"/><path d="M399.8 428.7L408.6 425.8L410.8 481.2L399.8 481.2Z" fill="url(#pSwim)"/>
<path d="M593.9 428.7L585.1 425.8L582.8 481.2L593.9 481.2Z" fill="#fff" stroke="none"/><path d="M593.9 428.7L585.1 425.8L582.8 481.2L593.9 481.2Z" fill="url(#pSwim)"/>
<path d="M409.9 428.7L419.4 488.9M583.8 428.7L574.2 488.9" fill="none"/>
<path d="M399 481.9C396.6 485.5 388.1 497.4 384.7 503.4C381.3 509.4 380.1 511.8 378.7 517.7C377.3 523.7 376.1 533.2 376.3 539.1C376.5 545 378.3 549.8 379.9 553.4C381.5 557 384 559 385.8 560.6C387.6 562.2 389.4 558.9 390.6 562.9C391.8 566.9 392.1 576 393 584.4C393.9 592.8 395.5 605.2 395.9 613C396.3 620.8 395.5 627.9 395.4 630.9L598 630.9C597.9 627.9 597.1 620.8 597.5 613C597.9 605.2 599.4 592.8 600.3 584.4C601.2 576 601.7 566.9 602.7 562.9C603.7 558.9 604.7 562.2 606.3 560.6C607.9 559 610.5 557 612.2 553.4C613.9 549.8 616.3 545 616.5 539.1C616.7 533.2 614.9 523.7 613.4 517.7C611.9 511.8 610.7 509.4 607.5 503.4C604.3 497.4 596.6 485.5 594.4 481.9L583 481.2L574.2 488.9Q535 516 496.7 542Q458 516 419.4 488.9L410.8 481.2Z" fill="#fff" stroke="none"/>
<path d="M399 481.9C396.6 485.5 388.1 497.4 384.7 503.4C381.3 509.4 380.1 511.8 378.7 517.7C377.3 523.7 376.1 533.2 376.3 539.1C376.5 545 378.3 549.8 379.9 553.4C381.5 557 384 559 385.8 560.6C387.6 562.2 389.4 558.9 390.6 562.9C391.8 566.9 392.1 576 393 584.4C393.9 592.8 395.5 605.2 395.9 613C396.3 620.8 395.5 627.9 395.4 630.9L598 630.9C597.9 627.9 597.1 620.8 597.5 613C597.9 605.2 599.4 592.8 600.3 584.4C601.2 576 601.7 566.9 602.7 562.9C603.7 558.9 604.7 562.2 606.3 560.6C607.9 559 610.5 557 612.2 553.4C613.9 549.8 616.3 545 616.5 539.1C616.7 533.2 614.9 523.7 613.4 517.7C611.9 511.8 610.7 509.4 607.5 503.4C604.3 497.4 596.6 485.5 594.4 481.9L583 481.2L574.2 488.9Q535 516 496.7 542Q458 516 419.4 488.9L410.8 481.2Z" fill="url(#pSwim)" stroke="none"/>
<path d="M395.4 629.7L598 629.7L598 631.6Q548 641 496.7 641.6Q445 641 395.4 631.6Z" fill="#fff" stroke="none"/>
<path d="M395.4 631.6C393.4 634.9 387.5 643.1 383.5 651.1C379.5 659.1 374.5 670.6 371.5 679.7C368.5 688.8 367.1 697.8 365.6 705.9C364.1 714 363 724.8 362.5 728.6C367.6 729.8 382 732.5 393 735.7C404 738.9 417.6 743.3 428.7 747.7C439.8 752.1 451.3 757.2 459.7 762C468.1 766.8 474 771.7 478.8 776.3C483.6 780.9 486.7 787.2 488.3 789.4L506.2 789.4C507.6 787.2 509.9 780.9 514.5 776.3C519.1 771.7 525.2 766.8 533.6 762C542 757.2 553.5 752.1 564.6 747.7C575.7 743.3 589.3 738.9 600.3 735.7C611.3 732.5 625.7 729.8 630.8 728.6C630.3 724.8 629.2 714 627.7 705.9C626.2 697.8 624.8 688.8 621.8 679.7C618.8 670.6 613.9 659.1 609.9 651.1C605.9 643.1 600 634.9 598 631.6Q548 641 496.7 641.6Q445 641 395.4 631.6Z" fill="#fff" stroke="none"/>
<path d="M395.4 631.6C393.4 634.9 387.5 643.1 383.5 651.1C379.5 659.1 374.5 670.6 371.5 679.7C368.5 688.8 367.1 697.8 365.6 705.9C364.1 714 363 724.8 362.5 728.6C367.6 729.8 382 732.5 393 735.7C404 738.9 417.6 743.3 428.7 747.7C439.8 752.1 451.3 757.2 459.7 762C468.1 766.8 474 771.7 478.8 776.3C483.6 780.9 486.7 787.2 488.3 789.4L506.2 789.4C507.6 787.2 509.9 780.9 514.5 776.3C519.1 771.7 525.2 766.8 533.6 762C542 757.2 553.5 752.1 564.6 747.7C575.7 743.3 589.3 738.9 600.3 735.7C611.3 732.5 625.7 729.8 630.8 728.6C630.3 724.8 629.2 714 627.7 705.9C626.2 697.8 624.8 688.8 621.8 679.7C618.8 670.6 613.9 659.1 609.9 651.1C605.9 643.1 600 634.9 598 631.6Q548 641 496.7 641.6Q445 641 395.4 631.6Z" fill="url(#pSwim)" stroke="none"/>
<path d="M399 481.9C396.6 485.5 388.1 497.4 384.7 503.4C381.3 509.4 380.1 511.8 378.7 517.7C377.3 523.7 376.1 533.2 376.3 539.1C376.5 545 378.3 549.8 379.9 553.4C381.5 557 384 559 385.8 560.6C387.6 562.2 389.4 558.9 390.6 562.9C391.8 566.9 392.1 576 393 584.4C393.9 592.8 395.5 605.2 395.9 613C396.3 620.8 395.5 627.9 395.4 630.9" fill="none"/>
<path d="M598 630.9C597.9 627.9 597.1 620.8 597.5 613C597.9 605.2 599.4 592.8 600.3 584.4C601.2 576 601.7 566.9 602.7 562.9C603.7 558.9 604.7 562.2 606.3 560.6C607.9 559 610.5 557 612.2 553.4C613.9 549.8 616.3 545 616.5 539.1C616.7 533.2 614.9 523.7 613.4 517.7C611.9 511.8 610.7 509.4 607.5 503.4C604.3 497.4 596.6 485.5 594.4 481.9" fill="none"/>
<path d="M419.4 488.9Q458 516 496.7 542Q535 516 574.2 488.9" fill="none" stroke-width="3.1"/>
<path d="M496.7 542V641.6" fill="none" stroke-width="2.4"/>
<path d="M395.4 631.6Q445 641 496.7 641.6Q548 641 598 631.6" fill="none" stroke-width="3.1"/>
<path d="M395.4 631.6C393.4 634.9 387.5 643.1 383.5 651.1C379.5 659.1 374.5 670.6 371.5 679.7C368.5 688.8 367.1 697.8 365.6 705.9C364.1 714 363 724.8 362.5 728.6" fill="none"/>
<path d="M630.8 728.6C630.3 724.8 629.2 714 627.7 705.9C626.2 697.8 624.8 688.8 621.8 679.7C618.8 670.6 613.9 659.1 609.9 651.1C605.9 643.1 600 634.9 598 631.6" fill="none"/>
<path d="M362.5 728.6C367.6 729.8 382 732.5 393 735.7C404 738.9 417.6 743.3 428.7 747.7C439.8 752.1 451.3 757.2 459.7 762C468.1 766.8 474 771.7 478.8 776.3C483.6 780.9 486.7 787.2 488.3 789.4" fill="none" stroke-width="3.1"/>
<path d="M506.2 789.4C507.6 787.2 509.9 780.9 514.5 776.3C519.1 771.7 525.2 766.8 533.6 762C542 757.2 553.5 752.1 564.6 747.7C575.7 743.3 589.3 738.9 600.3 735.7C611.3 732.5 625.7 729.8 630.8 728.6" fill="none" stroke-width="3.1"/>
<path d="M362.5 728.6Q420 756 484.7 789.4Q496.5 792 508.6 789.4Q573 756 630.8 728.6" fill="none" stroke-width="3"/>
</g>
<path d="M414.9 892.2C416.1 887.1 421.1 890.5 424.1 890C427.1 889.6 432.5 888.2 434.8 889.1C437.1 890 438 893.4 439.4 896C440.8 898.6 442.8 903.5 444 906.7C445.1 909.9 446.3 914.2 447 917.4C447.7 920.6 448.4 924.9 448.6 928.1C448.7 931.3 448.4 935.9 447.8 938.8C447.2 941.7 446 945.2 444.7 947.2C443.5 949.3 441.3 951.4 439.4 952.6C437.4 953.8 434 955 431.7 955.2C429.4 955.5 426.4 954.7 424.1 954.1C421.8 953.5 417.6 955.6 416.5 951C415.3 946.5 416.7 932.3 416.5 923.5C416.2 914.7 413.8 897.2 414.9 892.2Z" fill="#8f36fb"/>
<path d="M412.6 888.3C410.6 887.8 404.4 888.6 401.2 889.1C397.9 889.7 392.9 891.1 389.7 892.2C386.4 893.3 381.2 895.4 378.2 896.8C375.3 898.2 371.3 900.6 369.1 902.1C366.8 903.6 363.7 905.9 362.2 907.5C360.6 909 358.8 911.1 358 912.8C357.2 914.5 356.5 917.7 356.4 919.7C356.3 921.6 356.6 924.8 357.2 926.6C357.8 928.3 359.4 930.6 360.6 931.9C361.9 933.2 364.4 934.8 366 935.7C367.6 936.7 370.4 938.2 372.1 938.8C373.8 939.4 376.6 939.9 378.2 940C379.9 940 382.3 939.3 383.6 939C384.8 938.6 386.4 937.1 387 937.4C387.6 937.7 387.5 939.8 388 941.1C388.5 942.4 389.5 945 390.5 946.5C391.5 947.9 393.5 950 395 951C396.6 952.1 399.4 953.5 401.2 954.1C402.9 954.7 405.5 955.2 407.3 955.2C409 955.2 411.7 954.8 413.4 954.1C415.1 953.4 418.1 951.6 419.5 950.3C420.9 949 422.4 946.8 423.3 944.9C424.3 943.1 425.5 939.7 426 937.3C426.5 934.9 426.8 930.7 426.8 928.1C426.7 925.5 426.1 921.5 425.6 918.9C425.1 916.3 424.2 912.4 423.3 909.8C422.5 907.2 420.6 903 419.5 900.6C418.4 898.2 416.7 894.7 415.7 892.9C414.7 891.2 414.7 888.9 412.6 888.3Z" fill="#f886fa" stroke="#11118c" stroke-width="2.3" stroke-dasharray="9 3.6" stroke-linejoin="round"/>
<path d="M364.5 911.3C363.4 911.5 362.7 914.1 362.2 915.9C361.7 917.7 361.3 919.9 361.4 922C361.5 924 362 926.3 362.9 928.1C363.8 929.9 365.5 931.6 366.8 932.7C368 933.7 369.8 935.1 370.6 934.4C371.4 933.6 371.7 930.4 371.7 928.1C371.7 925.8 371.2 922.8 370.6 920.5C370 918.2 369.3 915.9 368.3 914.3C367.3 912.8 365.5 911 364.5 911.3Z" fill="#fff" stroke="#11118c" stroke-width="2.1" stroke-dasharray="9 3.6"/>
<ellipse cx="617.9" cy="1157.5" rx="162" ry="17.6" fill="#f9deb0"/>
<ellipse cx="711" cy="1190" rx="122" ry="16.5" fill="#f9deb0"/><g stroke-linejoin="miter">
<path d="M993.1 166V179" stroke="#323f54" stroke-width="2.4" fill="none"/>
<path d="M902.1 228.4L959.4 259.3M1083.3 227.9L1027.5 259.3" stroke="#323f54" stroke-width="2.2" fill="none"/>
<path d="M975.5 198.1L993.1 180L1012.2 199.6L1009.9 244.7L977 244.7Z" fill="#323f54"/>
<path d="M976.5 199.5L992 183.5V237.9Z" fill="#f0405c"/>
<path d="M1011.2 201L994.5 183.5V237.9Z" fill="#f0405c"/>
<path d="M943.4 227.2L977 244.7L963.3 258.5Z" fill="#323f54"/>
<path d="M1042.8 227.2L1009.9 244.7L1022.9 258.5Z" fill="#323f54"/>
<path d="M893 272L912.8 254.7L961.7 260.8L963.3 272Z" fill="#323f54"/>
<path d="M1094 272L1074.1 254.7L1024.4 260.8L1022.9 272Z" fill="#323f54"/>
<path d="M897.5 269.8L911.5 257.6L956 262.8Z" fill="#f0405c"/>
<path d="M1089.5 269.8L1075.4 257.6L1030.3 262.8Z" fill="#f0405c"/>
<path d="M993.1 180.5L894 271.3H1093Z" fill="none" stroke="#323f54" stroke-width="2.4"/>
<path d="M893 271.3H1094" fill="none" stroke="#323f54" stroke-width="2.8"/>
<path d="M963.4 270.3A29.7 27.3 0 0 1 1022.8 270.3Z" fill="#fff"/>
<circle cx="993.1" cy="160.6" r="4.3" fill="#fff" stroke="#323f54" stroke-width="2.2"/>
<circle cx="902.1" cy="228.4" r="4.3" fill="#fff" stroke="#323f54" stroke-width="2.2"/>
<circle cx="1083.3" cy="227.9" r="4.3" fill="#fff" stroke="#323f54" stroke-width="2.2"/>
<path d="M959.1 325.5H1028" stroke="#323f54" stroke-width="2.4" fill="none"/>
</g>
<text x="993.8" y="314.3" text-anchor="middle" font-size="33" font-weight="700" letter-spacing="4.3" fill="#323f54">FASHION</text>
<g fill="none" stroke="#f3ad46" stroke-width="1.5" stroke-linecap="round" stroke-linejoin="round">
<ellipse cx="941.2" cy="397.6" rx="10" ry="12.2"/>
<path d="M941.2 389.3C941.2 391.1 941 396.5 940.9 399.9C940.7 403.3 940.4 408 940.3 409.6"/>
<path d="M934.2 398.1C935.2 398.4 938.1 399.4 940.3 399.5C942.5 399.7 946.2 399.1 947.4 399"/>
<path d="M934.2 407.8C934.1 408.5 933.8 410.9 933.7 412.2C933.5 413.5 933.4 414.8 933.3 415.4"/>
<path d="M946.5 407.8C946.5 408.5 946.8 410.9 946.8 412.2C946.9 413.5 947 414.8 947 415.4"/>
<path d="M933 416.1C934.2 416.5 937.9 418.4 940.3 418.4C942.7 418.4 946.2 416.5 947.4 416.1"/>
<path d="M933.3 415.4C932.1 415.8 928.6 417 926.3 417.8C923.9 418.6 920.4 419.7 919.2 420.1"/>
<path d="M947 415.4C948 415.7 950.8 416.5 952.6 417.5C954.5 418.4 957 420.4 957.9 421"/>
<path d="M919.2 420.1C919.2 422.3 919 428.8 918.9 433.3C918.7 437.8 918.9 443.9 918.4 447.4C917.8 450.9 915.7 450.9 915.4 454.4C915 457.9 915.7 463.8 916.1 468.5C916.4 473.2 916.9 477.8 917.5 482.5C918 487.2 918.9 494.3 919.2 496.6"/>
<path d="M924.5 451.8C924.2 454 923.2 461 922.8 465C922.3 468.9 921.7 472.6 921.9 475.5C922 478.4 923.3 481.4 923.6 482.5"/>
<path d="M920.1 421C921 423.3 923.8 430.7 925.4 435.1C927 439.5 929 443 929.8 447.4C930.6 451.8 930.3 457.3 930.1 461.4C930 465.5 929.6 468.2 928.9 472C928.3 475.8 927.9 479.6 926.3 484.3C924.7 489 921.6 494.6 919.2 500.1C916.9 505.7 915 511.3 912.2 517.7C909.4 524.2 904.9 531.2 902.5 538.8C900.2 546.4 899.2 556.7 898.1 563.4C897.1 570.2 896.7 576.6 896.4 579.2"/>
<path d="M957.9 421C960.9 422.8 970.8 428.3 975.5 431.5C980.3 434.8 987 438.3 986.4 440.3C985.8 442.4 977 442.8 972 443.9C966.9 444.9 958.8 446.1 956.2 446.5"/>
<path d="M957.9 427.1C959.5 428 964.5 430.7 967.6 432.4C970.7 434.2 974.9 436.8 976.4 437.7"/>
<path d="M957.9 421C957 424.2 953.2 435.6 952.6 440.3C952.1 445 952.6 445.9 954.4 449.1C956.2 452.4 960.9 455.9 963.2 459.7C965.5 463.5 967.4 467.9 968.5 472C969.5 476.1 969.6 479 969.3 484.3C969.1 489.6 967.7 497.8 966.7 503.6C965.7 509.5 963 515.4 963.2 519.5C963.3 523.6 967.2 523.9 967.6 528.3C968 532.7 966.9 540 965.8 545.8C964.8 551.7 962 558.7 961.4 563.4C960.9 568.1 961.6 571.6 962.3 574C963 576.3 965.2 576.9 965.8 577.5"/>
<path d="M928.9 447.4C930.8 447.3 936.5 447.3 940.3 447C944.1 446.7 949.9 445.8 951.8 445.6"/>
<path d="M929.8 456.2C932.1 456.3 939.6 457.3 943.9 457C948.1 456.7 953.4 454.8 955.3 454.4"/>
<path d="M940.3 409.6C939.9 412.6 937.7 421.4 937.7 428C937.7 434.6 938.7 440.9 940.3 449.1C941.9 457.3 946.2 472.6 947.4 477.3"/>
<path d="M929.8 471.1C930.7 471.4 936.8 473.5 938.6 474.1C940.3 474.7 945.6 477.5 947.4 477.3C949.1 477.1 954.5 473.1 956.2 472C957.8 470.8 963.3 466.4 964.1 465.8"/>
<path d="M946.5 479C945.5 481.7 944 488.4 940.3 494.8C936.7 501.3 929.5 510.4 924.5 517.7C919.5 525 913.8 531.8 910.4 538.8C907.1 545.8 905.3 554.3 904.3 559.9C903.3 565.5 903.8 569.3 904.3 572.2C904.7 575.1 906.5 576.6 906.9 577.5"/>
<path d="M949.1 480.8C949.9 484.6 952.4 496.3 953.5 503.6C954.7 511 955.7 517.7 956.2 524.7C956.6 531.8 956.6 539.4 956.2 545.8C955.7 552.3 954 557.9 953.5 563.4C953.1 569 953.5 576.6 953.5 579.2"/>
<path d="M896.4 579.2C896.8 579.7 897.5 581.7 899 581.9C900.5 582 903.8 580.9 905.2 580.1C906.5 579.4 907.7 577.8 907.3 577.5C906.8 577.2 903.3 578.2 902.5 578.4"/>
<path d="M953.5 579.2C954.1 579.6 955.4 581.4 957 581.5C958.7 581.7 961.7 580.8 963.2 580.1C964.7 579.5 966.4 577.8 965.8 577.5C965.2 577.2 960.7 578.2 959.7 578.4"/>
<path d="M914 518.6C914.5 518.7 916.2 519.9 917.5 519.5C918.7 519 920.7 516.5 921.3 515.9"/>
<path d="M956.2 517.7C956.5 518.3 957.7 520 957.9 521.2C958.2 522.4 957.6 524.2 957.6 524.7"/>
</g><g filter="url(#fBlur8)" fill="#dcdcdc" opacity=".7">
<path d="M1190.8 160.5C1192.6 152.5 1198.1 142.7 1211 136.9C1223.9 131.2 1241.9 128.1 1268.2 126C1294.5 123.9 1341 123.7 1369 124.5C1397 125.3 1420.7 126.7 1436.4 131C1452.1 135.3 1460 142.7 1463.3 150.4C1466.6 158.1 1463.7 170.7 1456.5 177.3C1449.3 183.9 1441.1 190.4 1420 190C1398.9 189.6 1356.7 177 1330 175C1303.3 173 1281.7 176.3 1260 178C1238.3 179.7 1211.5 187.9 1200 185C1188.5 182.1 1189 168.5 1190.8 160.5Z" opacity=".8"/>
<path d="M1420 200C1428 189 1443 190.5 1453 194C1463 197.5 1473.8 209.8 1480 221C1486.2 232.2 1490 248.5 1490 261.4C1490 274.3 1486.2 288.9 1480 298.4C1473.8 307.9 1463 316.6 1453 318.5C1443 320.4 1428 319.8 1420 310C1412 300.2 1405 278.3 1405 260C1405 241.7 1412 211 1420 200Z" opacity=".9"/>
<path d="M1405 340C1413.9 329.3 1437.9 326.2 1453.2 326C1468.5 325.8 1487.5 332.1 1497 338.7C1506.5 345.3 1509.9 356.1 1510.4 365.6C1511 375.1 1507 388 1500.3 395.9C1493.6 403.8 1483.5 409.7 1470 412.7C1456.5 415.7 1431.2 417.8 1419.5 414C1407.8 410.2 1402.4 402.3 1400 390C1397.6 377.7 1396.1 350.7 1405 340Z"/>
<path d="M1160.5 426.2C1163.3 419.5 1169 412.2 1177.4 406C1185.8 399.8 1190.6 391.5 1211 389.2C1231.4 386.9 1267.5 387.2 1300 392C1332.5 396.8 1377.7 412.3 1406 418C1434.3 423.7 1462.2 422 1470 426.2C1477.8 430.4 1464.2 436.8 1453 443C1441.8 449.2 1422.3 457.6 1402.7 463.2C1383.1 468.8 1357.8 473.2 1335.4 476.6C1313 480 1287.8 482.5 1268.2 483.4C1248.6 484.2 1232.8 483.9 1217.7 481.7C1202.6 479.4 1186.9 475.8 1177.4 469.9C1167.9 464 1163.3 453.7 1160.5 446.4C1157.7 439.1 1157.7 432.9 1160.5 426.2Z"/>
<ellipse cx="1203" cy="290" rx="14" ry="26" opacity=".7"/>
</g>
<path d="M1290 481C1340 472 1400 456 1445 440" stroke="#f4f4f4" stroke-width="3" fill="none" opacity=".9" filter="url(#fBlur3)"/>
<rect x="1160.3" y="147.5" width="294.9" height="312" fill="none" stroke="#a6e0f7" stroke-width="1" opacity=".75"/>
<path d="M1269.6 147.8C1283 146.5 1292 153.5 1308.5 153.5C1325 153.5 1330 146.5 1342.6 147.8C1352 149 1362 153 1397.7 170.5L1443 190C1453 194.5 1457.5 199 1455.5 207L1439.5 276.5C1438.8 279.5 1437 280 1434.5 279.3L1408 273.5C1402 272.5 1400 274 1400 279L1406 449C1406 457 1402.5 460.5 1394.5 460.5H1221C1213 460.5 1209.5 457 1209.5 449L1215.5 279C1215.5 274 1213.5 272.5 1207.5 273.5L1181.5 279.3C1179 280 1177.2 279.5 1176.5 276.5L1160.5 207C1158.5 199 1163 194.5 1173 190L1216.2 170.5C1252 153 1262 149 1269.6 147.8Z" fill="#84f7e3"/>
<path d="M1269.6 147.8C1283 146.5 1292 153.5 1308.5 153.5C1325 153.5 1330 146.5 1342.6 147.8C1352 149 1362 153 1397.7 170.5L1443 190C1453 194.5 1457.5 199 1455.5 207L1439.5 276.5C1438.8 279.5 1437 280 1434.5 279.3L1408 273.5C1402 272.5 1400 274 1400 279L1406 449C1406 457 1402.5 460.5 1394.5 460.5H1221C1213 460.5 1209.5 457 1209.5 449L1215.5 279C1215.5 274 1213.5 272.5 1207.5 273.5L1181.5 279.3C1179 280 1177.2 279.5 1176.5 276.5L1160.5 207C1158.5 199 1163 194.5 1173 190L1216.2 170.5C1252 153 1262 149 1269.6 147.8Z" fill="url(#pShirt)"/>
<g fill="none" stroke="#1f6a7d" stroke-width="3.9" stroke-linejoin="round" stroke-linecap="round">
<path d="M1269.6 147.8C1283 146.5 1292 153.5 1308.5 153.5C1325 153.5 1330 146.5 1342.6 147.8C1352 149 1362 153 1397.7 170.5L1443 190C1453 194.5 1457.5 199 1455.5 207L1439.5 276.5C1438.8 279.5 1437 280 1434.5 279.3L1408 273.5C1402 272.5 1400 274 1400 279L1406 449C1406 457 1402.5 460.5 1394.5 460.5H1221C1213 460.5 1209.5 457 1209.5 449L1215.5 279C1215.5 274 1213.5 272.5 1207.5 273.5L1181.5 279.3C1179 280 1177.2 279.5 1176.5 276.5L1160.5 207C1158.5 199 1163 194.5 1173 190L1216.2 170.5C1252 153 1262 149 1269.6 147.8Z" stroke-width="4.4"/>
<path d="M1178.1 189.2L1197.5 270.2M1437.4 189.2L1417.9 270.2"/>
<path d="M1215.4 172.1C1219.5 205 1219.5 240 1215.5 276M1399.3 172.1C1395.5 205 1395.5 240 1400 276"/>
<path d="M1250.2 157.5L1272.9 200.5L1307.7 190.8L1342.6 200.5L1364.5 157.5"/>
<path d="M1270.5 150C1276 172 1290 184 1307.7 190.8C1326 184 1339 172 1342.5 150"/>
<path d="M1300.4 196.4V243.4H1315" stroke-width="3.4"/>
<circle cx="1311.8" cy="210.2" r="4.3" stroke-width="3.4"/><circle cx="1311.8" cy="228.9" r="4.3" stroke-width="3.4"/>
</g>
<g fill="none" stroke="#6ad0f0" stroke-width=".8" opacity=".8"><circle cx="1307.7" cy="304.2" r="6.5"/><path d="M1297 304.2H1318.5M1307.7 293.5V315"/></g>
<rect x="1155.5" y="142.7" width="9.6" height="9.6" fill="#7fd7fb" stroke="#a8e4fb" stroke-width=".6"/>
<rect x="1302.9" y="142.7" width="9.6" height="9.6" fill="#7fd7fb" stroke="#a8e4fb" stroke-width=".6"/>
<rect x="1450.4" y="142.7" width="9.6" height="9.6" fill="#7fd7fb" stroke="#a8e4fb" stroke-width=".6"/>
<rect x="1155.5" y="298.9" width="9.6" height="9.6" fill="#7fd7fb" stroke="#a8e4fb" stroke-width=".6"/>
<rect x="1450.4" y="298.9" width="9.6" height="9.6" fill="#7fd7fb" stroke="#a8e4fb" stroke-width=".6"/>
<rect x="1155.5" y="454.7" width="9.6" height="9.6" fill="#7fd7fb" stroke="#a8e4fb" stroke-width=".6"/>
<rect x="1302.9" y="454.7" width="9.6" height="9.6" fill="#7fd7fb" stroke="#a8e4fb" stroke-width=".6"/>
<rect x="1450.4" y="454.7" width="9.6" height="9.6" fill="#7fd7fb" stroke="#a8e4fb" stroke-width=".6"/>
<path d="M1409 295L1427.2 303.7L1409 312.8L1414.2 303.7Z" fill="#2a8be2"/>
<g fill="#dce8f2" filter="url(#fRough)">
<path d="M1213 577C1214.2 573 1219.2 570.2 1222 568C1224.8 565.8 1227.7 564 1230 564C1232.3 564 1235.2 565.7 1236 568C1236.8 570.3 1236.8 574.3 1235 578C1233.2 581.7 1228.3 587.7 1225 590C1221.7 592.3 1217 594.2 1215 592C1213 589.8 1211.8 581 1213 577Z"/>
<path d="M1262 672C1264.5 652.3 1276.6 657.4 1285 652C1293.4 646.6 1304.7 642.2 1312.5 639.4C1320.3 636.6 1326.9 634.7 1332 635C1337.1 635.3 1341.3 637 1343 641C1344.7 645 1344.5 652 1342.3 659.3C1340.1 666.6 1335 675.9 1330 685C1325 694.1 1317.8 704.5 1312.5 714C1307.2 723.5 1302.6 733.5 1298 742C1293.4 750.5 1289.7 760.3 1285 765C1280.3 769.7 1273.8 785.5 1270 770C1266.2 754.5 1259.5 691.7 1262 672Z"/>
<path d="M1280 835C1283.3 820 1292.9 824.8 1300 822C1307.1 819.2 1317.3 817 1322.5 818.3C1327.7 819.6 1329.8 825 1331 830C1332.2 835 1331.4 841.9 1329.9 848.2C1328.4 854.5 1324.9 861.4 1322 868C1319.1 874.6 1316.2 882.2 1312.5 887.9C1308.8 893.6 1305.4 898 1300 902C1294.6 906 1283.3 923.2 1280 912C1276.7 900.8 1276.7 850 1280 835Z"/>
<path d="M1280 945C1284.2 928.3 1292.9 933.7 1300 930C1307.1 926.3 1317 922.7 1322.5 922.7C1328 922.7 1330.9 926.7 1333 930C1335.1 933.3 1335.4 937.6 1334.9 942.6C1334.4 947.6 1332.1 954.2 1330 960C1327.9 965.8 1325.8 971.1 1322.5 977.4C1319.2 983.7 1314.2 991.4 1310 998C1305.8 1004.6 1301.8 1011.8 1297.6 1017.1C1293.4 1022.4 1288.8 1027.8 1285 1030C1281.2 1032.2 1275.8 1044.2 1275 1030C1274.2 1015.8 1275.8 961.7 1280 945Z"/>
<path d="M1030 745C1028.2 718.1 1023.8 746.2 1019.3 748.7C1014.8 751.2 1008 755.9 1003 760C998 764.1 991.3 768.6 989.5 773.6C987.7 778.6 990.2 785.6 992 790C993.8 794.4 1000.3 794.7 1000 800C999.7 805.3 994.2 815.7 990 822C985.8 828.3 979.2 833.6 975 838C970.8 842.4 967.4 843.2 964.6 848.2C961.8 853.2 959.2 861.4 958 868C956.8 874.6 957.2 880.9 957.2 887.9C957.2 894.9 957.2 903.4 958 910C958.8 916.6 959.3 923.9 962.1 927.7C964.9 931.5 970.4 932.2 975 933C979.6 933.8 983.7 933.9 989.5 932.6C995.3 931.3 1003.2 928.8 1010 925C1016.8 921.2 1026.7 940 1030 910C1033.3 880 1031.8 771.9 1030 745Z"/>
<path d="M1030 940C1028.2 911.3 1024.3 943.4 1019.3 947.6C1014.3 951.8 1006.6 958.4 1000 965C993.4 971.6 982 981.5 979.5 987.3C977 993.1 982.4 997 985 1000C987.6 1003 996.7 998.3 995 1005C993.3 1011.7 980.9 1030.5 975 1040C969.1 1049.5 964.6 1055.2 959.6 1061.9C954.6 1068.6 949.1 1075 945 1080C940.9 1085 936 1087.7 934.8 1091.7C933.6 1095.7 935.5 1100.7 938 1104C940.5 1107.3 945.2 1110.9 949.7 1111.6C954.2 1112.3 959.1 1110.8 965 1108C970.9 1105.2 979.3 1098.5 985 1095C990.7 1091.5 998.1 1085.5 999.4 1086.7C1000.7 1087.9 994.6 1097 993 1102C991.4 1107 988.3 1113.2 989.5 1116.5C990.7 1119.8 993.2 1121.4 1000 1122C1006.8 1122.6 1025 1150.3 1030 1120C1035 1089.7 1031.8 968.7 1030 940Z"/>
<path d="M1030 1135C1026.2 1129.2 1016.3 1145.5 1012 1150C1007.7 1154.5 1004.7 1157.8 1004 1162C1003.3 1166.2 1005.3 1171.2 1008 1175C1010.7 1178.8 1015.5 1183.3 1020 1185C1024.5 1186.7 1033.3 1193.3 1035 1185C1036.7 1176.7 1033.8 1140.8 1030 1135Z"/>
</g>
<path d="M1058.9 579.9C1057.5 584.2 1053.4 596.5 1050.5 605.9C1047.6 615.3 1044 626.3 1041.3 636.5C1038.6 646.7 1036.4 656.8 1034.4 667C1032.4 677.2 1030.8 687.4 1029.1 697.6C1027.4 707.8 1025.8 717.8 1024.5 728.2C1023.2 738.6 1022.4 746.4 1021.4 760C1020.4 773.6 1019.2 793.3 1018.5 810C1017.8 826.7 1017.5 828.3 1017.3 860C1017.1 891.7 1017.1 960 1017.3 1000C1017.5 1040 1017.9 1069.7 1018.5 1100C1019.1 1130.3 1020.3 1166.2 1020.7 1182C1021.1 1197.8 1021 1192.8 1021 1195L1286 1195C1286.1 1192.8 1285.9 1197.8 1286.4 1182C1286.9 1166.2 1288.3 1130.3 1289 1100C1289.7 1069.7 1290.7 1040 1290.8 1000C1290.9 960 1290.3 891.7 1289.8 860C1289.3 828.3 1288.8 826.7 1288 810C1287.2 793.3 1286.3 773.6 1285.2 760C1284.1 746.4 1282.7 738.6 1281.3 728.2C1279.9 717.8 1278.4 707.8 1276.8 697.6C1275.2 687.4 1273.5 677.2 1271.4 667C1269.4 656.8 1267.2 646.7 1264.5 636.5C1261.8 626.3 1258.3 615.3 1255.4 605.9C1252.5 596.5 1248.3 584.2 1246.9 579.9Q1200 588 1152.9 588.5Q1105 588 1058.9 579.9Z" fill="#1a2a3a" opacity=".55" filter="url(#fSh2)"/>
<path d="M1058.9 579.9C1057.5 584.2 1053.4 596.5 1050.5 605.9C1047.6 615.3 1044 626.3 1041.3 636.5C1038.6 646.7 1036.4 656.8 1034.4 667C1032.4 677.2 1030.8 687.4 1029.1 697.6C1027.4 707.8 1025.8 717.8 1024.5 728.2C1023.2 738.6 1022.4 746.4 1021.4 760C1020.4 773.6 1019.2 793.3 1018.5 810C1017.8 826.7 1017.5 828.3 1017.3 860C1017.1 891.7 1017.1 960 1017.3 1000C1017.5 1040 1017.9 1069.7 1018.5 1100C1019.1 1130.3 1020.3 1166.2 1020.7 1182C1021.1 1197.8 1021 1192.8 1021 1195L1286 1195C1286.1 1192.8 1285.9 1197.8 1286.4 1182C1286.9 1166.2 1288.3 1130.3 1289 1100C1289.7 1069.7 1290.7 1040 1290.8 1000C1290.9 960 1290.3 891.7 1289.8 860C1289.3 828.3 1288.8 826.7 1288 810C1287.2 793.3 1286.3 773.6 1285.2 760C1284.1 746.4 1282.7 738.6 1281.3 728.2C1279.9 717.8 1278.4 707.8 1276.8 697.6C1275.2 687.4 1273.5 677.2 1271.4 667C1269.4 656.8 1267.2 646.7 1264.5 636.5C1261.8 626.3 1258.3 615.3 1255.4 605.9C1252.5 596.5 1248.3 584.2 1246.9 579.9Q1200 588 1152.9 588.5Q1105 588 1058.9 579.9Z" fill="#fff"/>
<path d="M1058.9 579.9C1057.5 584.2 1053.4 596.5 1050.5 605.9C1047.6 615.3 1044 626.3 1041.3 636.5C1038.6 646.7 1036.4 656.8 1034.4 667C1032.4 677.2 1030.8 687.4 1029.1 697.6C1027.4 707.8 1025.8 717.8 1024.5 728.2C1023.2 738.6 1022.4 746.4 1021.4 760C1020.4 773.6 1019.2 793.3 1018.5 810C1017.8 826.7 1017.5 828.3 1017.3 860C1017.1 891.7 1017.1 960 1017.3 1000C1017.5 1040 1017.9 1069.7 1018.5 1100C1019.1 1130.3 1020.3 1166.2 1020.7 1182C1021.1 1197.8 1021 1192.8 1021 1195L1286 1195C1286.1 1192.8 1285.9 1197.8 1286.4 1182C1286.9 1166.2 1288.3 1130.3 1289 1100C1289.7 1069.7 1290.7 1040 1290.8 1000C1290.9 960 1290.3 891.7 1289.8 860C1289.3 828.3 1288.8 826.7 1288 810C1287.2 793.3 1286.3 773.6 1285.2 760C1284.1 746.4 1282.7 738.6 1281.3 728.2C1279.9 717.8 1278.4 707.8 1276.8 697.6C1275.2 687.4 1273.5 677.2 1271.4 667C1269.4 656.8 1267.2 646.7 1264.5 636.5C1261.8 626.3 1258.3 615.3 1255.4 605.9C1252.5 596.5 1248.3 584.2 1246.9 579.9Q1200 588 1152.9 588.5Q1105 588 1058.9 579.9Z" fill="url(#pSkirt)"/>
<path d="M1107 589.5L1200 589.5L1203 596Q1152.9 602 1104 596Z" fill="#fff" stroke="#f7931e" stroke-width="1.6"/>
<path d="M1152.9 590.5V593.5" stroke="#f7931e" stroke-width="2.5"/>
<g fill="none" stroke="#f7931e" stroke-width="4.2" stroke-linecap="round" stroke-linejoin="round">
<path d="M1058.9 579.9C1057.5 584.2 1053.4 596.5 1050.5 605.9C1047.6 615.3 1044 626.3 1041.3 636.5C1038.6 646.7 1036.4 656.8 1034.4 667C1032.4 677.2 1030.8 687.4 1029.1 697.6C1027.4 707.8 1025.8 717.8 1024.5 728.2C1023.2 738.6 1022.4 746.4 1021.4 760C1020.4 773.6 1019.2 793.3 1018.5 810C1017.8 826.7 1017.5 828.3 1017.3 860C1017.1 891.7 1017.1 960 1017.3 1000C1017.5 1040 1017.9 1069.7 1018.5 1100C1019.1 1130.3 1020.3 1166.2 1020.7 1182C1021.1 1197.8 1021 1192.8 1021 1195"/>
<path d="M1286 1195C1286.1 1192.8 1285.9 1197.8 1286.4 1182C1286.9 1166.2 1288.3 1130.3 1289 1100C1289.7 1069.7 1290.7 1040 1290.8 1000C1290.9 960 1290.3 891.7 1289.8 860C1289.3 828.3 1288.8 826.7 1288 810C1287.2 793.3 1286.3 773.6 1285.2 760C1284.1 746.4 1282.7 738.6 1281.3 728.2C1279.9 717.8 1278.4 707.8 1276.8 697.6C1275.2 687.4 1273.5 677.2 1271.4 667C1269.4 656.8 1267.2 646.7 1264.5 636.5C1261.8 626.3 1258.3 615.3 1255.4 605.9C1252.5 596.5 1248.3 584.2 1246.9 579.9"/>
<path d="M1058.9 579.9Q1105 588 1152.9 588.5Q1200 588 1246.9 579.9" stroke-width="4.6"/>
<path d="M1086 594Q1120 600.5 1152.9 600.5Q1186 600.5 1221 594" stroke-width="4"/>
<path d="M1058.9 579.9Q1075 590 1090 594.5M1246.9 579.9Q1232 590 1217 594.5" stroke-width="3"/>
<path d="M1088.7 594.4Q1079 625 1074.2 657.1M1108.6 598.2Q1103 630 1100.9 663.2M1198.8 598.2Q1204.5 630 1206.4 663.2M1218.7 594.4Q1228 625 1232.4 657.1" stroke-width="4"/>
</g>
<path d="M1508.6 1138.2C1509.2 1135.5 1524 1135.7 1530.5 1135.7C1536.9 1135.7 1540 1135.8 1547.3 1138.2C1554.6 1140.6 1566.3 1146.3 1574.2 1150C1582 1153.6 1588.8 1155 1594.4 1160C1600 1165.1 1612.3 1177.3 1607.8 1180.2C1603.3 1183.2 1577.5 1179.9 1567.5 1177.7C1557.4 1175.5 1554 1171.1 1547.3 1166.8C1540.5 1162.4 1533.5 1156.4 1527.1 1151.6C1520.6 1146.9 1508 1140.8 1508.6 1138.2Z" fill="#56dcc5"/>
<g fill="none" stroke-linecap="round" stroke="#b4f5e8" stroke-width="1">
<path d="M1521.2 1140.2C1525.8 1141.2 1539.8 1143.2 1549 1146.3C1558.1 1149.3 1567.7 1154.1 1575.9 1158.4C1584 1162.6 1594.1 1169.6 1597.7 1171.8"/>
<path d="M1549 1146.3L1538 1153 M1549 1146.3L1542.6 1136.8 M1575.9 1158.4L1560.4 1168.1 M1575.9 1158.4L1575.2 1153 M1592.7 1171.8L1580.9 1177.7"/>
</g>
<path d="M1498.5 1076.8C1499.9 1074.3 1513.9 1078.6 1522 1081C1530.2 1083.4 1539.7 1087.2 1547.3 1091.1C1554.8 1095 1561.3 1099.5 1567.5 1104.5C1573.6 1109.6 1579.2 1114.1 1584.3 1121.4C1589.3 1128.7 1597.2 1142.5 1597.7 1148.3C1598.3 1154 1592.7 1156.1 1587.6 1155.8C1582.6 1155.6 1574.2 1150.1 1567.5 1146.6C1560.7 1143.1 1553.7 1139.6 1547.3 1134.8C1540.8 1130.1 1534.4 1124.4 1528.8 1118C1523.2 1111.6 1518.7 1103 1513.6 1096.1C1508.6 1089.3 1497.1 1079.3 1498.5 1076.8Z" fill="#fad233"/>
<g fill="none" stroke-linecap="round" stroke="#fdeaa0" stroke-width="1">
<path d="M1511.1 1082.7C1515.7 1085.5 1530 1093.3 1538.9 1099.5C1547.7 1105.7 1556.5 1113 1564.1 1119.7C1571.7 1126.4 1580.9 1136.5 1584.3 1139.9"/>
<path d="M1538.9 1099.5L1536.3 1086 M1538.9 1099.5L1524.6 1102.9 M1564.1 1119.7L1567.5 1105.4 M1564.1 1119.7L1544.7 1126.7 M1577.5 1141.5L1563.2 1143.2"/>
</g>
<path d="M1537.2 987.7C1540.8 987.1 1546.4 989.8 1550.6 993.5C1554.8 997.3 1557.4 1006.2 1562.4 1010.4C1567.5 1014.6 1576.3 1015.4 1580.9 1018.8C1585.5 1022.1 1588.8 1026.3 1590.2 1030.5C1591.6 1034.7 1588.1 1039.5 1589.3 1044C1590.6 1048.5 1595.6 1052.7 1597.7 1057.5C1599.8 1062.2 1600.2 1065.9 1601.9 1072.6C1603.6 1079.3 1608.5 1089.7 1607.8 1097.8C1607.1 1105.9 1603.3 1118 1597.7 1121.4C1592.1 1124.7 1581.7 1120.8 1574.2 1118C1566.6 1115.2 1556.7 1109.6 1552.3 1104.5C1548 1099.5 1549 1093.3 1548.1 1087.7C1547.3 1082.1 1549.4 1075.4 1547.3 1070.9C1545.2 1066.4 1538 1065.3 1535.5 1060.8C1533 1056.3 1531.7 1049.9 1532.1 1044C1532.6 1038.1 1538.3 1031.4 1538 1025.5C1537.7 1019.6 1532 1013.4 1530.5 1008.7C1528.9 1003.9 1527.7 1000.4 1528.8 996.9C1529.9 993.4 1533.5 988.2 1537.2 987.7Z" fill="#9d4bd9"/>
<g fill="none" stroke-linecap="round" stroke="#cf90f2" stroke-width="1">
<path d="M1538 996.9C1541.2 1001.7 1551.3 1014.8 1557.4 1025.5C1563.4 1036.2 1569.1 1050.4 1574.2 1060.8C1579.2 1071.2 1585.4 1083.2 1587.6 1087.7"/>
<path d="M1557.4 1025.5L1564.1 1012.9 M1557.4 1025.5L1543.1 1023.5 M1574.2 1060.8L1586 1039 M1574.2 1060.8L1543.1 1054.1 M1584.3 1086L1560.7 1086 M1591 1089.4L1599.7 1072.9"/>
</g>
<path d="M1623 1007.8C1625.7 1007.6 1630 1013.2 1631.4 1017.1C1632.7 1021 1629.9 1028.9 1632.2 1033.9C1634.5 1039 1643.8 1046.2 1646.5 1050.7C1649.1 1055.3 1650.6 1060.1 1649.9 1064.2C1649.1 1068.2 1643.5 1072.6 1641.5 1077.6C1639.4 1082.7 1637.9 1091.8 1636.4 1097.8C1634.9 1103.9 1633.1 1111.9 1631.4 1118C1629.6 1124.1 1625.9 1128.8 1624.6 1138.2C1623.4 1147.5 1626.5 1174 1623 1180.2C1619.4 1186.4 1606.4 1181.7 1601.1 1179.4C1595.8 1177.1 1589.7 1170 1587.6 1165.1C1585.6 1160.2 1589.5 1151.6 1587.6 1146.6C1585.7 1141.5 1576 1136.2 1575 1131.5C1574 1126.7 1581.2 1120.2 1580.9 1114.6C1580.7 1109.1 1573.6 1098.9 1573.3 1094.5C1573.1 1090 1576.6 1085.7 1579.2 1085.2C1581.9 1084.7 1588.5 1089.2 1591 1091.1C1593.5 1093 1595.5 1099.8 1596 1097.8C1596.5 1095.8 1594.5 1083.2 1594.4 1077.6C1594.2 1072.1 1595 1065.1 1595.2 1060.8C1595.5 1056.5 1594 1053.1 1596 1049C1598.1 1045 1606.1 1038.4 1608.7 1033.9C1611.2 1029.4 1610.7 1022.7 1612.9 1018.8C1615 1014.9 1620.2 1008.1 1623 1007.8Z" fill="#4f2ebd"/>
<g fill="none" stroke-linecap="round" stroke="#9a78ee" stroke-width="1">
<path d="M1623 1015.4C1622.1 1020.2 1618.7 1033.6 1617.9 1044C1617.1 1054.4 1617.5 1064.7 1617.9 1077.6C1618.3 1090.5 1620 1114.1 1620.4 1121.4"/>
<path d="M1617.9 1044.8L1607.8 1037.3 M1617.9 1044.8L1628.8 1038.1 M1617.9 1077.6L1601.1 1065 M1617.9 1077.6L1639.8 1061.7 M1619.6 1109.6L1602.8 1095.3 M1619.6 1109.6L1632.2 1097.8 M1579.2 1091.9L1597.7 1118 M1597.7 1118L1617.9 1163.4 M1594.4 1113L1583.4 1111.3 M1594.4 1113L1599.1 1103.7 M1606.1 1138.2L1583.4 1133.1 M1606.1 1138.2L1614.5 1122.2 M1616.2 1161.7L1596.9 1157"/>
</g>
<path d="M1686.9 1048.2C1690.5 1048.2 1694.3 1053.1 1695.3 1057.5C1696.3 1061.8 1694.6 1069.2 1692.7 1074.3C1690.9 1079.3 1684.3 1081.8 1684.3 1087.7C1684.3 1093.6 1692 1103.4 1692.7 1109.6C1693.4 1115.8 1691.5 1121.1 1688.5 1124.7C1685.6 1128.4 1677.2 1127 1675.1 1131.5C1673 1135.9 1677.6 1145.5 1675.9 1151.6C1674.2 1157.8 1669.6 1163.7 1665 1168.5C1660.4 1173.2 1655.5 1178.3 1648.2 1180.2C1640.9 1182.2 1626 1184.4 1621.3 1180.2C1616.5 1176 1620.4 1162 1619.6 1155C1618.7 1148 1616.2 1143.5 1616.2 1138.2C1616.2 1132.9 1616.2 1127.8 1619.6 1123C1623 1118.3 1634.2 1114.4 1636.4 1109.6C1638.7 1104.8 1632.5 1099.5 1633 1094.5C1633.6 1089.4 1635.6 1083.2 1639.8 1079.3C1644 1075.4 1652.7 1074.6 1658.3 1070.9C1663.9 1067.3 1668.6 1061.2 1673.4 1057.5C1678.2 1053.7 1683.2 1048.2 1686.9 1048.2Z" fill="#fad233"/>
<g fill="none" stroke-linecap="round" stroke="#fdf0b4" stroke-width="1.2">
<path d="M1686 1057.8C1682.5 1062.8 1671.3 1077.1 1665 1087.7C1658.7 1098.3 1653.2 1109.9 1648.2 1121.4C1643.1 1132.9 1638.1 1147.1 1634.7 1156.7C1631.4 1166.2 1629.1 1174.9 1628 1178.5"/>
<path d="M1648.2 1122.2L1638.1 1100.3 M1648.2 1122.2L1680.1 1115 M1635.6 1155L1624.6 1134 M1635.6 1155L1662.5 1146.9"/>
</g>
<rect x="1558.2" y="1179" width="99.7" height="4" fill="#20386a"/>
</svg>
</div>
<div id="panel">
<div class="abs" style="left:0;top:-1.3px;width:275px;height:1082px">
<!-- coordinates here are relative to panel origin (1763,104) -->
<div class="fld" style="left:13px;top:15px;width:78px">1130<i>X</i></div>
<div class="fld" style="left:99px;top:15px;width:78px">182<i>Y</i></div>
<div class="fld" style="left:185px;top:15px;width:78px">0<i style="top:-2px;right:8px;font-size:15px;color:#b4b2b8">°</i></div>
<div class="fld" style="left:13px;top:57px;width:78px">269<i>W</i></div>
<div class="fld" style="left:99px;top:57px;width:78px">284<i>H</i></div>
<div class="btn" style="left:185px;top:58px;width:35.5px;height:22px"></div>
<div class="btn" style="left:227px;top:58px;width:35.5px;height:22px"></div>
<svg class="abs" style="left:185px;top:58px" width="78" height="22" viewBox="0 0 78 22"><path d="M16.8 4.5v13h-7z" fill="#e6e6e8"/><path d="M19 5.2l6 12h-6z" fill="none" stroke="#d0d0d2" stroke-width=".9"/><path d="M51.5 4.2l14 6.2h-14z" fill="#e6e6e8"/><path d="M52 12.4h13l-13 5.8z" fill="none" stroke="#d0d0d2" stroke-width=".9"/></svg>
<div class="sep" style="top:95px"></div>
<div class="t" style="left:14.5px;top:108px;font-size:18.5px;line-height:22px;font-weight:400;color:#f0f0f2;letter-spacing:-.2px;-webkit-text-stroke:.65px #f0f0f2">Style</div>
<div class="ln" style="top:137px"></div>
<div class="btn" style="left:15px;top:152.5px;width:245px;height:22px"></div>
<div class="t" style="left:24px;top:154px">Color Fills</div>
<div class="step" style="left:240px;top:155.5px;width:18px;height:17px"></div>
<svg class="abs" style="left:240px;top:155.5px" width="18" height="17" viewBox="0 0 18 17" fill="none" stroke="#fff" stroke-width="1.5" stroke-linecap="round" stroke-linejoin="round"><path d="M6 6.6l3-3 3 3M6 10.4l3 3 3-3"/></svg>
<div class="sw" style="left:15px;top:190px;background:#f5309a"></div>
<div class="sw" style="left:78.7px;top:190px;background:#7f7f7f"></div>
<div class="sw" style="left:142.2px;top:190px;background:#f5291a"></div>
<div class="sw" style="left:205.8px;top:190px;background:#f540fa"></div>
<div class="sw" style="left:15px;top:242.5px;background:#2f9afc"></div>
<div class="sw" style="left:78.7px;top:242.5px;background:#f99726"></div>
<div class="sw" style="left:142.2px;top:242.5px;background:#f88bf9"></div>
<div class="sw" style="left:205.8px;top:242.5px;background:#2b911c"></div>
<div class="sep" style="top:302.5px"></div>
<div class="btn" style="left:22.5px;top:313px;width:231px;height:22px"></div>
<div class="t" style="left:22.5px;top:315px;width:231px;text-align:center">Add Style</div>
<div class="sep" style="top:345.5px"></div>
<!-- Color Fill -->
<div class="h" style="left:14.5px;top:358px">Color Fill</div>
<div class="tog" style="left:226px;top:357px"></div>
<div class="ln" style="top:390px"></div>
<div class="t" style="left:23px;top:411px">Fill Color</div>
<div class="well" style="left:181px;top:406.5px"><div class="c" style="background:#7ff5e0"></div><div class="w"></div></div>
<div class="t" style="left:23px;top:449px">Opacity</div>
<div class="t" style="right:22px;top:447.5px">100%</div>
<div class="trk" style="left:23px;top:487px;width:225px;background:#1f78f6"></div>
<div class="knob" style="left:236.5px;top:480px"></div>
<div class="abs" style="left:22px;top:521.5px;width:13.5px;height:13.5px;border-radius:3px;background:#504d54"></div>
<div class="t" style="left:39.5px;top:519.5px">Shadow</div>
<div class="well" style="left:181px;top:517.5px"><div class="w"></div><div class="abs" style="left:48.5px;top:1px;width:1px;height:22px;background:rgba(255,255,255,.25)"></div></div>
<div class="t" style="left:23px;top:557px">Distance</div>
<div class="trk" style="left:105px;top:564.5px;width:149px;background:#2c2930"></div>
<div class="knob" style="left:131.5px;top:557.5px;background:#49464d"></div>
<div class="t" style="left:23px;top:593px">Blur</div>
<div class="trk" style="left:105px;top:600.5px;width:149px;background:#2c2930"></div>
<div class="knob" style="left:127px;top:593.5px;background:#49464d"></div>
<div class="t" style="left:23px;top:629px">Angle</div>
<div class="abs" style="left:109.5px;top:630px;width:22px;height:22px;border-radius:11px;background:#3b383f"></div>
<div class="abs" style="left:122.5px;top:632.5px;width:6.5px;height:6.5px;border-radius:4px;background:#ececee"></div>
<div class="sep" style="top:676.5px"></div>
<!-- Basic Stroke -->
<div class="h" style="left:14.5px;top:689px">Basic Stroke</div>
<div class="tog" style="left:226px;top:688.5px"></div>
<div class="ln" style="top:722px"></div>
<div class="t" style="left:21px;top:741.5px">Stroke Color</div>
<div class="well" style="left:180.5px;top:739px"><div class="c" style="background:#2a7c8e"></div><div class="w"></div></div>
<div class="abs" style="left:20.5px;top:780.5px;width:55px;height:23px;background:#1a1a1b;border:1px solid #4c4a4f"></div>
<div class="t" style="left:20.5px;top:783px;width:50.5px;text-align:right;font-size:15px">4</div>
<div class="btn" style="left:80px;top:780.5px;width:14px;height:23px;border-radius:6px"></div>
<svg class="abs" style="left:80px;top:780.5px" width="14" height="23" viewBox="0 0 14 23" fill="none" stroke="#e8e8ea" stroke-width="1.4" stroke-linecap="round" stroke-linejoin="round"><path d="M4 8.5l3-3 3 3M4 14.5l3 3 3-3"/></svg>
<div class="btn" style="left:103px;top:782px;width:150px;height:21px"></div>
<div class="t" style="left:111.5px;top:783px">Solid Line</div>
<div class="step" style="left:233.5px;top:784px;width:17.5px;height:17px"></div>
<svg class="abs" style="left:233.5px;top:784px" width="18" height="17" viewBox="0 0 18 17" fill="none" stroke="#fff" stroke-width="1.5" stroke-linecap="round" stroke-linejoin="round"><path d="M6 6.6l3-3 3 3M6 10.4l3 3 3-3"/></svg>
<div class="t" style="left:21px;top:828.5px">Opacity</div>
<div class="t" style="right:22px;top:829.5px">100%</div>
<div class="trk" style="left:23px;top:865.5px;width:225px;background:#1f78f6"></div>
<div class="knob" style="left:236.5px;top:858.5px"></div>
<div class="sep" style="top:897px"></div>
<!-- Pattern Fill -->
<div class="h" style="left:14.5px;top:910px">Pattern Fill</div>
<div class="tog" style="left:226px;top:909px"></div>
<div class="ln" style="top:942.5px"></div>
<div class="t" style="left:23px;top:964px">Pattern Color</div>
<div class="well" style="left:180.5px;top:960px"><div class="c" style="background:linear-gradient(153.5deg,#000 0,#000 49%,#c6c6c8 51%,#c6c6c8 100%)"></div><div class="w"></div></div>
<div class="t" style="left:23px;top:997px">Opacity</div>
<div class="t" style="right:22px;top:997px">20%</div>
<div class="trk" style="left:23px;top:1037.8px;width:231px;background:#39363d"></div>
<div class="trk" style="left:23px;top:1037.8px;width:50px;background:#1f78f6"></div>
<div class="knob" style="left:65.5px;top:1030.8px"></div>
<div class="t" style="left:23px;top:1063.3px">Spacing</div>
<div class="trk" style="left:97px;top:1070.5px;width:105px;background:#39363d"></div>
<div class="trk" style="left:97px;top:1070.5px;width:40px;background:#1f78f6"></div>
<div class="knob" style="left:130.5px;top:1063.5px"></div>
<div class="abs" style="left:215px;top:1061px;width:42px;height:24px;background:#1a1a1b;border:1px solid #4c4a4f"></div>
<div class="t" style="left:220px;top:1063px;font-size:15px">19</div>
</div>
</div>
</div>
<div id="dock">
<svg class="abs" style="left:11.4px;top:12px" width="57" height="57" viewBox="0 0 100 100" ><defs><linearGradient id="fa" x1="0" y1="0" x2="0" y2="1"><stop offset="0" stop-color="#35b8fb"/><stop offset="1" stop-color="#1b6ff0"/></linearGradient><linearGradient id="fb" x1="0" y1="0" x2="0" y2="1"><stop offset="0" stop-color="#f0f1f6"/><stop offset="1" stop-color="#d4d7e2"/></linearGradient><clipPath id="fc"><rect width="100" height="100" rx="23"/></clipPath></defs>
<g clip-path="url(#fc)"><rect width="100" height="100" fill="url(#fa)"/><path d="M56 0C48 18 44 38 44 58H57C57 72 59 88 63 100H100V0Z" fill="url(#fb)"/>
<path d="M56 0C48 18 44 38 44 58H57C57 72 59 88 63 100" fill="none" stroke="#1a2436" stroke-width="0" /></g>
<path d="M27 29v9M74 29v9" stroke="#16202e" stroke-width="4" stroke-linecap="round"/><path d="M20 68C38 82 62 82 80 68" fill="none" stroke="#16202e" stroke-width="3.6" stroke-linecap="round"/></svg>
<svg class="abs" style="left:86.1px;top:12px" width="57" height="57" viewBox="0 0 100 100" ><defs><linearGradient id="sa" x1="0" y1="0" x2="1" y2="0"><stop offset="0" stop-color="#9a0f48"/><stop offset=".45" stop-color="#3c1a52"/><stop offset="1" stop-color="#075a50"/></linearGradient><linearGradient id="sb" x1="0" y1="0" x2="0" y2="1"><stop offset="0" stop-color="#000" stop-opacity=".3"/><stop offset=".55" stop-color="#0a2a7a" stop-opacity=".15"/><stop offset="1" stop-color="#0a3aa0" stop-opacity=".75"/></linearGradient><radialGradient id="sc"><stop offset="0" stop-color="#fff"/><stop offset=".3" stop-color="#eaf6ff" stop-opacity=".85"/><stop offset="1" stop-color="#fff" stop-opacity="0"/></radialGradient><radialGradient id="sd" cx=".3" cy=".45" r=".5"><stop offset="0" stop-color="#ff4a8a" stop-opacity=".95"/><stop offset="1" stop-color="#ff4a8a" stop-opacity="0"/></radialGradient><radialGradient id="se" cx=".72" cy=".55" r=".45"><stop offset="0" stop-color="#2ac8ff" stop-opacity=".9"/><stop offset="1" stop-color="#2ac8ff" stop-opacity="0"/></radialGradient><radialGradient id="sf" cx=".55" cy=".25" r=".4"><stop offset="0" stop-color="#3af0a0" stop-opacity=".6"/><stop offset="1" stop-color="#3af0a0" stop-opacity="0"/></radialGradient><filter id="sg"><feGaussianBlur stdDeviation="2.2"/></filter></defs>
<rect width="100" height="100" rx="23" fill="url(#sa)"/><rect width="100" height="100" rx="23" fill="url(#sb)"/>
<circle cx="50" cy="50" r="42" fill="#160c2a" fill-opacity=".4"/>
<circle cx="50" cy="50" r="41" fill="url(#sd)"/><circle cx="50" cy="50" r="41" fill="url(#se)"/><circle cx="50" cy="50" r="41" fill="url(#sf)"/>
<g filter="url(#sg)"><path d="M16 44C26 28 42 32 50 46C60 62 74 68 86 56C76 80 58 76 50 60C42 46 28 50 16 44Z" fill="#ff5a94" fill-opacity=".8"/><path d="M14 58C28 70 42 64 50 50C60 36 76 34 86 46C76 26 58 28 50 42C40 58 28 62 14 58Z" fill="#4ad0ff" fill-opacity=".7"/></g>
<circle cx="53" cy="49" r="19" fill="url(#sc)"/>
<circle cx="50" cy="50" r="42" fill="none" stroke="#eadcf4" stroke-opacity=".5" stroke-width="1.6"/></svg>
<svg class="abs" style="left:160.8px;top:12px" width="57" height="57" viewBox="0 0 100 100" ><defs><linearGradient id="la" x1="0" y1="0" x2="0" y2="1"><stop offset="0" stop-color="#cfcbd6"/><stop offset="1" stop-color="#aeaab8"/></linearGradient></defs><rect width="100" height="100" rx="23" fill="url(#la)"/><rect x="16" y="16" width="19" height="19" rx="5" fill="#3edc4c"/><rect x="40.5" y="16" width="19" height="19" rx="5" fill="#fcc42c"/><rect x="65" y="16" width="19" height="19" rx="5" fill="#f98a1c"/><rect x="16" y="40.5" width="19" height="19" rx="5" fill="#ea221c"/><rect x="40.5" y="40.5" width="19" height="19" rx="5" fill="#aaacb2"/><rect x="65" y="40.5" width="19" height="19" rx="5" fill="#fa426c"/><rect x="16" y="65" width="19" height="19" rx="5" fill="#a242ea"/><rect x="40.5" y="65" width="19" height="19" rx="5" fill="#1c9cfa"/><rect x="65" y="65" width="19" height="19" rx="5" fill="#3edab2"/></svg>
<svg class="abs" style="left:235.6px;top:12px" width="57" height="57" viewBox="0 0 100 100" ><defs><linearGradient id="fa2" x1="0" y1="0" x2="0" y2="1"><stop offset="0" stop-color="#1c9af6"/><stop offset="1" stop-color="#1c7ee8"/></linearGradient><linearGradient id="fa3" x1="0" y1="0" x2="0" y2="1"><stop offset="0" stop-color="#fff"/><stop offset="1" stop-color="#e4e4e8"/></linearGradient></defs><rect width="100" height="100" rx="23" fill="url(#fa3)"/><circle cx="50" cy="50" r="43.5" fill="url(#fa2)"/><path d="M86 50L91.5 50M87.4 56.6L90.9 57.2M85.7 63L89 64.2M81.2 68L85.9 70.8M79.1 74.4L81.8 76.7M74.4 79.1L76.7 81.8M68 81.2L70.8 85.9M63 85.7L64.2 89M56.6 87.4L57.2 90.9M50 86L50 91.5M43.4 87.4L42.8 90.9M37 85.7L35.8 89M32 81.2L29.3 85.9M25.6 79.1L23.3 81.8M20.9 74.4L18.2 76.7M18.8 68L14.1 70.8M14.3 63L11 64.2M12.6 56.6L9.1 57.2M14 50L8.5 50M12.6 43.4L9.1 42.8M14.3 37L11 35.8M18.8 32L14.1 29.2M20.9 25.6L18.2 23.3M25.6 20.9L23.3 18.2M32 18.8L29.2 14.1M37 14.3L35.8 11M43.4 12.6L42.8 9.1M50 14L50 8.5M56.6 12.6L57.2 9.1M63 14.3L64.2 11M68 18.8L70.8 14.1M74.4 20.9L76.7 18.2M79.1 25.6L81.8 23.3M81.2 32L85.9 29.2M85.7 37L89 35.8M87.4 43.4L90.9 42.8" stroke="#fff" stroke-opacity=".85" stroke-width="1.2"/><path d="M80 20L45.5 45.5L54.5 54.5Z" fill="#f0433a"/><path d="M20 80L45.5 45.5L54.5 54.5Z" fill="#f4f4f6"/></svg>
<svg class="abs" style="left:310.3px;top:12px" width="57" height="57" viewBox="0 0 100 100" ><defs><clipPath id="cc"><rect width="100" height="100" rx="23"/></clipPath><linearGradient id="cb" x1="0" y1="0" x2="0" y2="1"><stop offset="0" stop-color="#fff"/><stop offset="1" stop-color="#ececee"/></linearGradient></defs><g clip-path="url(#cc)"><rect width="100" height="100" fill="url(#cb)"/><rect width="100" height="30" fill="#f0524c"/></g><text x="50" y="23.5" text-anchor="middle" font-family="Liberation Sans, sans-serif" font-weight="700" font-size="19" fill="#fff">JAN</text><text x="50" y="85" text-anchor="middle" font-family="Liberation Sans, sans-serif" font-size="60" fill="#2a2a2c">7</text></svg>
<svg class="abs" style="left:385px;top:12px" width="57" height="57" viewBox="0 0 100 100" ><defs><clipPath id="nc"><rect width="100" height="100" rx="23"/></clipPath><linearGradient id="nb" x1="0" y1="0" x2="0" y2="1"><stop offset="0" stop-color="#fffefa"/><stop offset="1" stop-color="#e6e4dc"/></linearGradient><linearGradient id="ny" x1="0" y1="0" x2="0" y2="1"><stop offset="0" stop-color="#fdd444"/><stop offset="1" stop-color="#f8c020"/></linearGradient></defs><g clip-path="url(#nc)"><rect width="100" height="100" fill="url(#nb)"/><rect width="100" height="27" fill="url(#ny)"/><path d="M0 30.5H100" stroke="#b8b4a8" stroke-width="1" stroke-dasharray="1.5 1.5"/><path d="M0 51H100M0 75H100" stroke="#d8d6ce" stroke-width="1"/></g></svg>
<svg class="abs" style="left:459.7px;top:12px" width="57" height="57" viewBox="0 0 100 100" ><rect width="100" height="100" rx="23" fill="#fdfdfd"/><g fill="none" stroke-width="1.6"><circle cx="20" cy="25.5" r="8" stroke="#1a84f8"/><circle cx="20" cy="50" r="8" stroke="#f0342c"/><circle cx="20" cy="75" r="8" stroke="#f8981c"/></g><circle cx="20" cy="25.5" r="5.4" fill="#1a84f8"/><circle cx="20" cy="50" r="5.4" fill="#f0342c"/><circle cx="20" cy="75" r="5.4" fill="#f8981c"/><path d="M38 25.5H90M38 50H90M38 75H90" stroke="#cfcfd2" stroke-width="2.2"/></svg>
<svg class="abs" style="left:534.4px;top:12px" width="57" height="57" viewBox="0 0 100 100" ><defs><clipPath id="mc"><rect width="100" height="100" rx="23"/></clipPath></defs><g clip-path="url(#mc)"><rect width="100" height="100" fill="#f2f1ee"/><path d="M0 0H100V62L55 100H52V60L0 30Z" fill="#5cd468"/><path d="M0 0L22 22V0Z" fill="#f4f3f0"/><path d="M0 6L26 30L0 46Z" fill="#62d66c"/><rect x="27" y="0" width="20" height="60" fill="#2b8cf4"/><rect x="22" y="0" width="5" height="100" fill="#f8f8f8"/><rect x="47" y="0" width="5" height="100" fill="#f8f8f8"/><path d="M0 40L22 52V100H0Z" fill="#e88cd0"/><path d="M52 86L70 70L100 98V100H52Z" fill="#fcd03c"/><path d="M52 62L100 96V70L60 44Z" fill="#f6f6f6"/><circle cx="98" cy="4" r="36" fill="none" stroke="#d4d0dc" stroke-width="9"/><circle cx="98" cy="4" r="27" fill="none" stroke="#f4f4f6" stroke-width="5"/><circle cx="98" cy="4" r="22" fill="#60d46a"/></g><circle cx="36" cy="62" r="21.5" fill="#f4f6fa"/><circle cx="36" cy="62" r="18" fill="#2c8cf2"/><path d="M36 48.5L46 73L36 67L26 73Z" fill="#fff"/></svg>
<svg class="abs" style="left:609.2px;top:12px" width="57" height="57" viewBox="0 0 100 100" ><rect width="100" height="100" rx="23" fill="#fdfdfd"/><rect x="37.5" y="7" width="25" height="41" rx="12.5" fill="#f8a020" fill-opacity=".86" transform="rotate(0 50 50)"/><rect x="37.5" y="7" width="25" height="41" rx="12.5" fill="#e8d820" fill-opacity=".86" transform="rotate(45 50 50)"/><rect x="37.5" y="7" width="25" height="41" rx="12.5" fill="#90cc40" fill-opacity=".86" transform="rotate(90 50 50)"/><rect x="37.5" y="7" width="25" height="41" rx="12.5" fill="#44b878" fill-opacity=".86" transform="rotate(135 50 50)"/><rect x="37.5" y="7" width="25" height="41" rx="12.5" fill="#4898e0" fill-opacity=".86" transform="rotate(180 50 50)"/><rect x="37.5" y="7" width="25" height="41" rx="12.5" fill="#8870d0" fill-opacity=".86" transform="rotate(225 50 50)"/><rect x="37.5" y="7" width="25" height="41" rx="12.5" fill="#c06cb0" fill-opacity=".86" transform="rotate(270 50 50)"/><rect x="37.5" y="7" width="25" height="41" rx="12.5" fill="#f05048" fill-opacity=".86" transform="rotate(315 50 50)"/></svg>
<svg class="abs" style="left:683.9px;top:12px" width="57" height="57" viewBox="0 0 100 100" ><defs><clipPath id="kc"><rect width="100" height="100" rx="23"/></clipPath></defs><g clip-path="url(#kc)"><rect width="100" height="100" fill="#fdf6ff"/><path d="M10 0V100M0 10H100M20 0V100M0 20H100M30 0V100M0 30H100M40 0V100M0 40H100M50 0V100M0 50H100M60 0V100M0 60H100M70 0V100M0 70H100M80 0V100M0 80H100M90 0V100M0 90H100" stroke="#f0c4f4" stroke-width=".8"/></g><rect x="1.5" y="1.5" width="97" height="97" rx="21.5" fill="none" stroke="#b83ccc" stroke-width="2"/><g fill="none" stroke="#c040d0" stroke-width="1.1" stroke-linecap="round" stroke-linejoin="round"><ellipse cx="51" cy="17" rx="7" ry="8.5"/><path d="M48 25L47 33M54 25L55 33M47 33L34 37L38 58L33 75L36 100M55 33L70 38L88 48L72 56L70 52M70 38L68 56L74 72L72 100M38 58L68 56M38 68L50 78L66 68M50 78L42 100M52 78L62 100M34 37L31 62L36 84M50 33L51 78"/></g></svg>
<svg class="abs" style="left:758.6px;top:12px" width="57" height="57" viewBox="0 0 100 100" ><defs><linearGradient id="ga" x1="0" y1="0" x2="0" y2="1"><stop offset="0" stop-color="#62ea6e"/><stop offset="1" stop-color="#2ac43a"/></linearGradient><linearGradient id="gw" x1="0" y1="0" x2="0" y2="1"><stop offset="0" stop-color="#fff"/><stop offset="1" stop-color="#dff4e0"/></linearGradient></defs><rect width="100" height="100" rx="23" fill="url(#ga)"/><path d="M50 18C30 18 14 31 14 47C14 56 19 64 27 69C27 74 24 79 20 82C27 82 34 79 38 75C42 76 46 76.5 50 76.5C70 76.5 86 63 86 47C86 31 70 18 50 18Z" fill="url(#gw)"/></svg>
<svg class="abs" style="left:833.3px;top:12px" width="57" height="57" viewBox="0 0 100 100" ><rect width="100" height="100" rx="23" fill="url(#ga)"/><rect x="15" y="30" width="47" height="40" rx="10" fill="url(#gw)"/><path d="M66 46L82 32C84 30.5 86 31.5 86 34V66C86 68.5 84 69.5 82 68L66 54Z" fill="url(#gw)"/></svg>
<svg class="abs" style="left:908px;top:12px" width="57" height="57" viewBox="0 0 100 100" ><defs><linearGradient id="pa" x1="0" y1="0" x2="0" y2="1"><stop offset="0" stop-color="#fcb43a"/><stop offset="1" stop-color="#f08a1c"/></linearGradient></defs><rect width="100" height="100" rx="23" fill="url(#pa)"/><path d="M17 85H85" stroke="#fbe0b0" stroke-width="2.2"/><path d="M17 84L22 72L74 20C77 17 81 18 82 21C83 24 82 26 80 28L28 80Z" fill="#fdfaf4"/><path d="M17 84L22 72L28 80Z" fill="#e8dcc8"/><path d="M46 48L52 54" stroke="#8a8a8a" stroke-width="2"/></svg>
<svg class="abs" style="left:982.8px;top:12px" width="57" height="57" viewBox="0 0 100 100" ><defs><clipPath id="wc"><rect x="21" y="21" width="58" height="58" rx="3"/></clipPath></defs><rect width="100" height="100" rx="23" fill="#fff"/><g clip-path="url(#wc)"><rect x="21" y="21" width="58" height="58" fill="#fff"/><path d="M21 21H41L79 59V79H59L21 41Z" fill="#f8405c"/><path d="M21 53L47 79H21Z" fill="#f2385a"/><path d="M53 21H79V47Z" fill="#f2385a"/></g></svg>
<svg class="abs" style="left:1057.5px;top:12px" width="57" height="57" viewBox="0 0 100 100" ><defs><linearGradient id="ma" x1="0" y1="0" x2="0" y2="1"><stop offset="0" stop-color="#fb5e76"/><stop offset="1" stop-color="#f2243e"/></linearGradient></defs><rect width="100" height="100" rx="23" fill="url(#ma)"/><path d="M40 27L72 19V64C72 70 68 74 62 75C57 76 53 73 53 69C53 65 56 62 61 61L66 60V33L46 38V70C46 76 42 80 36 81C31 82 27 79 27 75C27 71 30 68 35 67L40 66Z" fill="#fff"/></svg>
<svg class="abs" style="left:1132.2px;top:12px" width="57" height="57" viewBox="0 0 100 100" ><defs><linearGradient id="aa" x1="0" y1="0" x2="0" y2="1"><stop offset="0" stop-color="#2cb4fa"/><stop offset="1" stop-color="#1a64e6"/></linearGradient></defs><rect width="100" height="100" rx="23" fill="url(#aa)"/><g stroke="#fff" stroke-width="7" stroke-linecap="round" fill="none"><path d="M55 22L30 66M26 73L23 78M45 22L77 78M18 62H50M64 62H82"/></g></svg>
<svg class="abs" style="left:1206.9px;top:12px" width="57" height="57" viewBox="0 0 100 100" ><defs><linearGradient id="ya" x1="0" y1="0" x2="0" y2="1"><stop offset="0" stop-color="#d0d0d4"/><stop offset="1" stop-color="#8a8a90"/></linearGradient></defs><rect width="100" height="100" rx="23" fill="url(#ya)"/><circle cx="50" cy="50" r="42" fill="#5c5c62"/><rect x="48.2" y="6" width="3.6" height="7" fill="#3c3c40" transform="rotate(0 50 50)"/><rect x="48.2" y="6" width="3.6" height="7" fill="#3c3c40" transform="rotate(9 50 50)"/><rect x="48.2" y="6" width="3.6" height="7" fill="#3c3c40" transform="rotate(18 50 50)"/><rect x="48.2" y="6" width="3.6" height="7" fill="#3c3c40" transform="rotate(27 50 50)"/><rect x="48.2" y="6" width="3.6" height="7" fill="#3c3c40" transform="rotate(36 50 50)"/><rect x="48.2" y="6" width="3.6" height="7" fill="#3c3c40" transform="rotate(45 50 50)"/><rect x="48.2" y="6" width="3.6" height="7" fill="#3c3c40" transform="rotate(54 50 50)"/><rect x="48.2" y="6" width="3.6" height="7" fill="#3c3c40" transform="rotate(63 50 50)"/><rect x="48.2" y="6" width="3.6" height="7" fill="#3c3c40" transform="rotate(72 50 50)"/><rect x="48.2" y="6" width="3.6" height="7" fill="#3c3c40" transform="rotate(81 50 50)"/><rect x="48.2" y="6" width="3.6" height="7" fill="#3c3c40" transform="rotate(90 50 50)"/><rect x="48.2" y="6" width="3.6" height="7" fill="#3c3c40" transform="rotate(99 50 50)"/><rect x="48.2" y="6" width="3.6" height="7" fill="#3c3c40" transform="rotate(108 50 50)"/><rect x="48.2" y="6" width="3.6" height="7" fill="#3c3c40" transform="rotate(117 50 50)"/><rect x="48.2" y="6" width="3.6" height="7" fill="#3c3c40" transform="rotate(126 50 50)"/><rect x="48.2" y="6" width="3.6" height="7" fill="#3c3c40" transform="rotate(135 50 50)"/><rect x="48.2" y="6" width="3.6" height="7" fill="#3c3c40" transform="rotate(144 50 50)"/><rect x="48.2" y="6" width="3.6" height="7" fill="#3c3c40" transform="rotate(153 50 50)"/><rect x="48.2" y="6" width="3.6" height="7" fill="#3c3c40" transform="rotate(162 50 50)"/><rect x="48.2" y="6" width="3.6" height="7" fill="#3c3c40" transform="rotate(171 50 50)"/><rect x="48.2" y="6" width="3.6" height="7" fill="#3c3c40" transform="rotate(180 50 50)"/><rect x="48.2" y="6" width="3.6" height="7" fill="#3c3c40" transform="rotate(189 50 50)"/><rect x="48.2" y="6" width="3.6" height="7" fill="#3c3c40" transform="rotate(198 50 50)"/><rect x="48.2" y="6" width="3.6" height="7" fill="#3c3c40" transform="rotate(207 50 50)"/><rect x="48.2" y="6" width="3.6" height="7" fill="#3c3c40" transform="rotate(216 50 50)"/><rect x="48.2" y="6" width="3.6" height="7" fill="#3c3c40" transform="rotate(225 50 50)"/><rect x="48.2" y="6" width="3.6" height="7" fill="#3c3c40" transform="rotate(234 50 50)"/><rect x="48.2" y="6" width="3.6" height="7" fill="#3c3c40" transform="rotate(243 50 50)"/><rect x="48.2" y="6" width="3.6" height="7" fill="#3c3c40" transform="rotate(252 50 50)"/><rect x="48.2" y="6" width="3.6" height="7" fill="#3c3c40" transform="rotate(261 50 50)"/><rect x="48.2" y="6" width="3.6" height="7" fill="#3c3c40" transform="rotate(270 50 50)"/><rect x="48.2" y="6" width="3.6" height="7" fill="#3c3c40" transform="rotate(279 50 50)"/><rect x="48.2" y="6" width="3.6" height="7" fill="#3c3c40" transform="rotate(288 50 50)"/><rect x="48.2" y="6" width="3.6" height="7" fill="#3c3c40" transform="rotate(297 50 50)"/><rect x="48.2" y="6" width="3.6" height="7" fill="#3c3c40" transform="rotate(306 50 50)"/><rect x="48.2" y="6" width="3.6" height="7" fill="#3c3c40" transform="rotate(315 50 50)"/><rect x="48.2" y="6" width="3.6" height="7" fill="#3c3c40" transform="rotate(324 50 50)"/><rect x="48.2" y="6" width="3.6" height="7" fill="#3c3c40" transform="rotate(333 50 50)"/><rect x="48.2" y="6" width="3.6" height="7" fill="#3c3c40" transform="rotate(342 50 50)"/><rect x="48.2" y="6" width="3.6" height="7" fill="#3c3c40" transform="rotate(351 50 50)"/><circle cx="50" cy="50" r="37" fill="#8e8e94"/><circle cx="50" cy="50" r="31" fill="#48484c"/><circle cx="50" cy="50" r="26" fill="#9a9aa0"/><circle cx="50" cy="50" r="21" fill="#5a5a60"/><g stroke="#a8a8ae" stroke-width="5" stroke-linecap="round"><path d="M50 50V26M50 50L71 62M50 50L29 62"/></g><circle cx="50" cy="50" r="4" fill="#48484c"/></svg>
<div class="abs" style="left:1245px;top:5.5px;width:26px;height:26px;border-radius:13px;background:#f1453b;color:#fff;font-size:16px;line-height:26px;text-align:center">1</div>
<div class="abs" style="left:1288.5px;top:10.5px;width:1px;height:65px;background:rgba(255,255,255,.28)"></div>
<svg class="abs" style="left:1312px;top:10px" width="60" height="60" viewBox="0 0 100 100"><path d="M4 14C4 9 7 6 12 6H34C38 6 40 8 42 11L44 14H86C91 14 94 17 94 22V30H4Z" fill="#2e9ce0"/><path d="M4 20H90C93 20 96 22 96 26V34H4Z" fill="#3eaaea"/><path d="M2 28C2 24 5 22 8 22H92C95 22 98 24 98 28V90C98 94 95 97 92 97H8C5 97 2 94 2 90Z" fill="#64c6fa"/><path d="M2 28C2 24 5 22 8 22H92C95 22 98 24 98 28V31H2Z" fill="#52b8f4"/><path d="M2 90V86H98V90C98 94 95 97 92 97H8C5 97 2 94 2 90Z" fill="#4ab0ee"/></svg>
<svg class="abs" style="left:1390.5px;top:5px" width="54" height="68" viewBox="0 0 54 68"><defs><linearGradient id="ta" x1="0" y1="0" x2="1" y2="0"><stop offset="0" stop-color="#6a6a70"/><stop offset=".35" stop-color="#a2a2a8"/><stop offset=".7" stop-color="#7c7c82"/><stop offset="1" stop-color="#5a5a60"/></linearGradient></defs><path d="M6 8L12 3L20 6L26 1L33 5L40 2L46 7L49 13H4Z" fill="#e8e8ec"/><path d="M14 6L20 9L17 13ZM30 5L36 9L30 13ZM40 6L44 11L38 12Z" fill="#b8b0c8"/><path d="M24 5L28 9L22 12Z" fill="#5cc8d8"/><path d="M34 6L38 8L35 11Z" fill="#d87838"/><path d="M2 13C2 11 15 10 27 10C39 10 52 11 52 13L46 62C46 66 37 67.5 27 67.5C17 67.5 8 66 8 62Z" fill="url(#ta)" fill-opacity=".92"/><ellipse cx="27" cy="13" rx="25" ry="3.5" fill="none" stroke="#c8c8cc" stroke-width="1" stroke-opacity=".7"/></svg>
<div class="abs" style="left:38px;top:79.5px;width:4px;height:4px;border-radius:2px;background:#a090c8"></div>
<div class="abs" style="left:710px;top:79.5px;width:4px;height:4px;border-radius:2px;background:#a090c8"></div>
</div>
</body>
</html>
